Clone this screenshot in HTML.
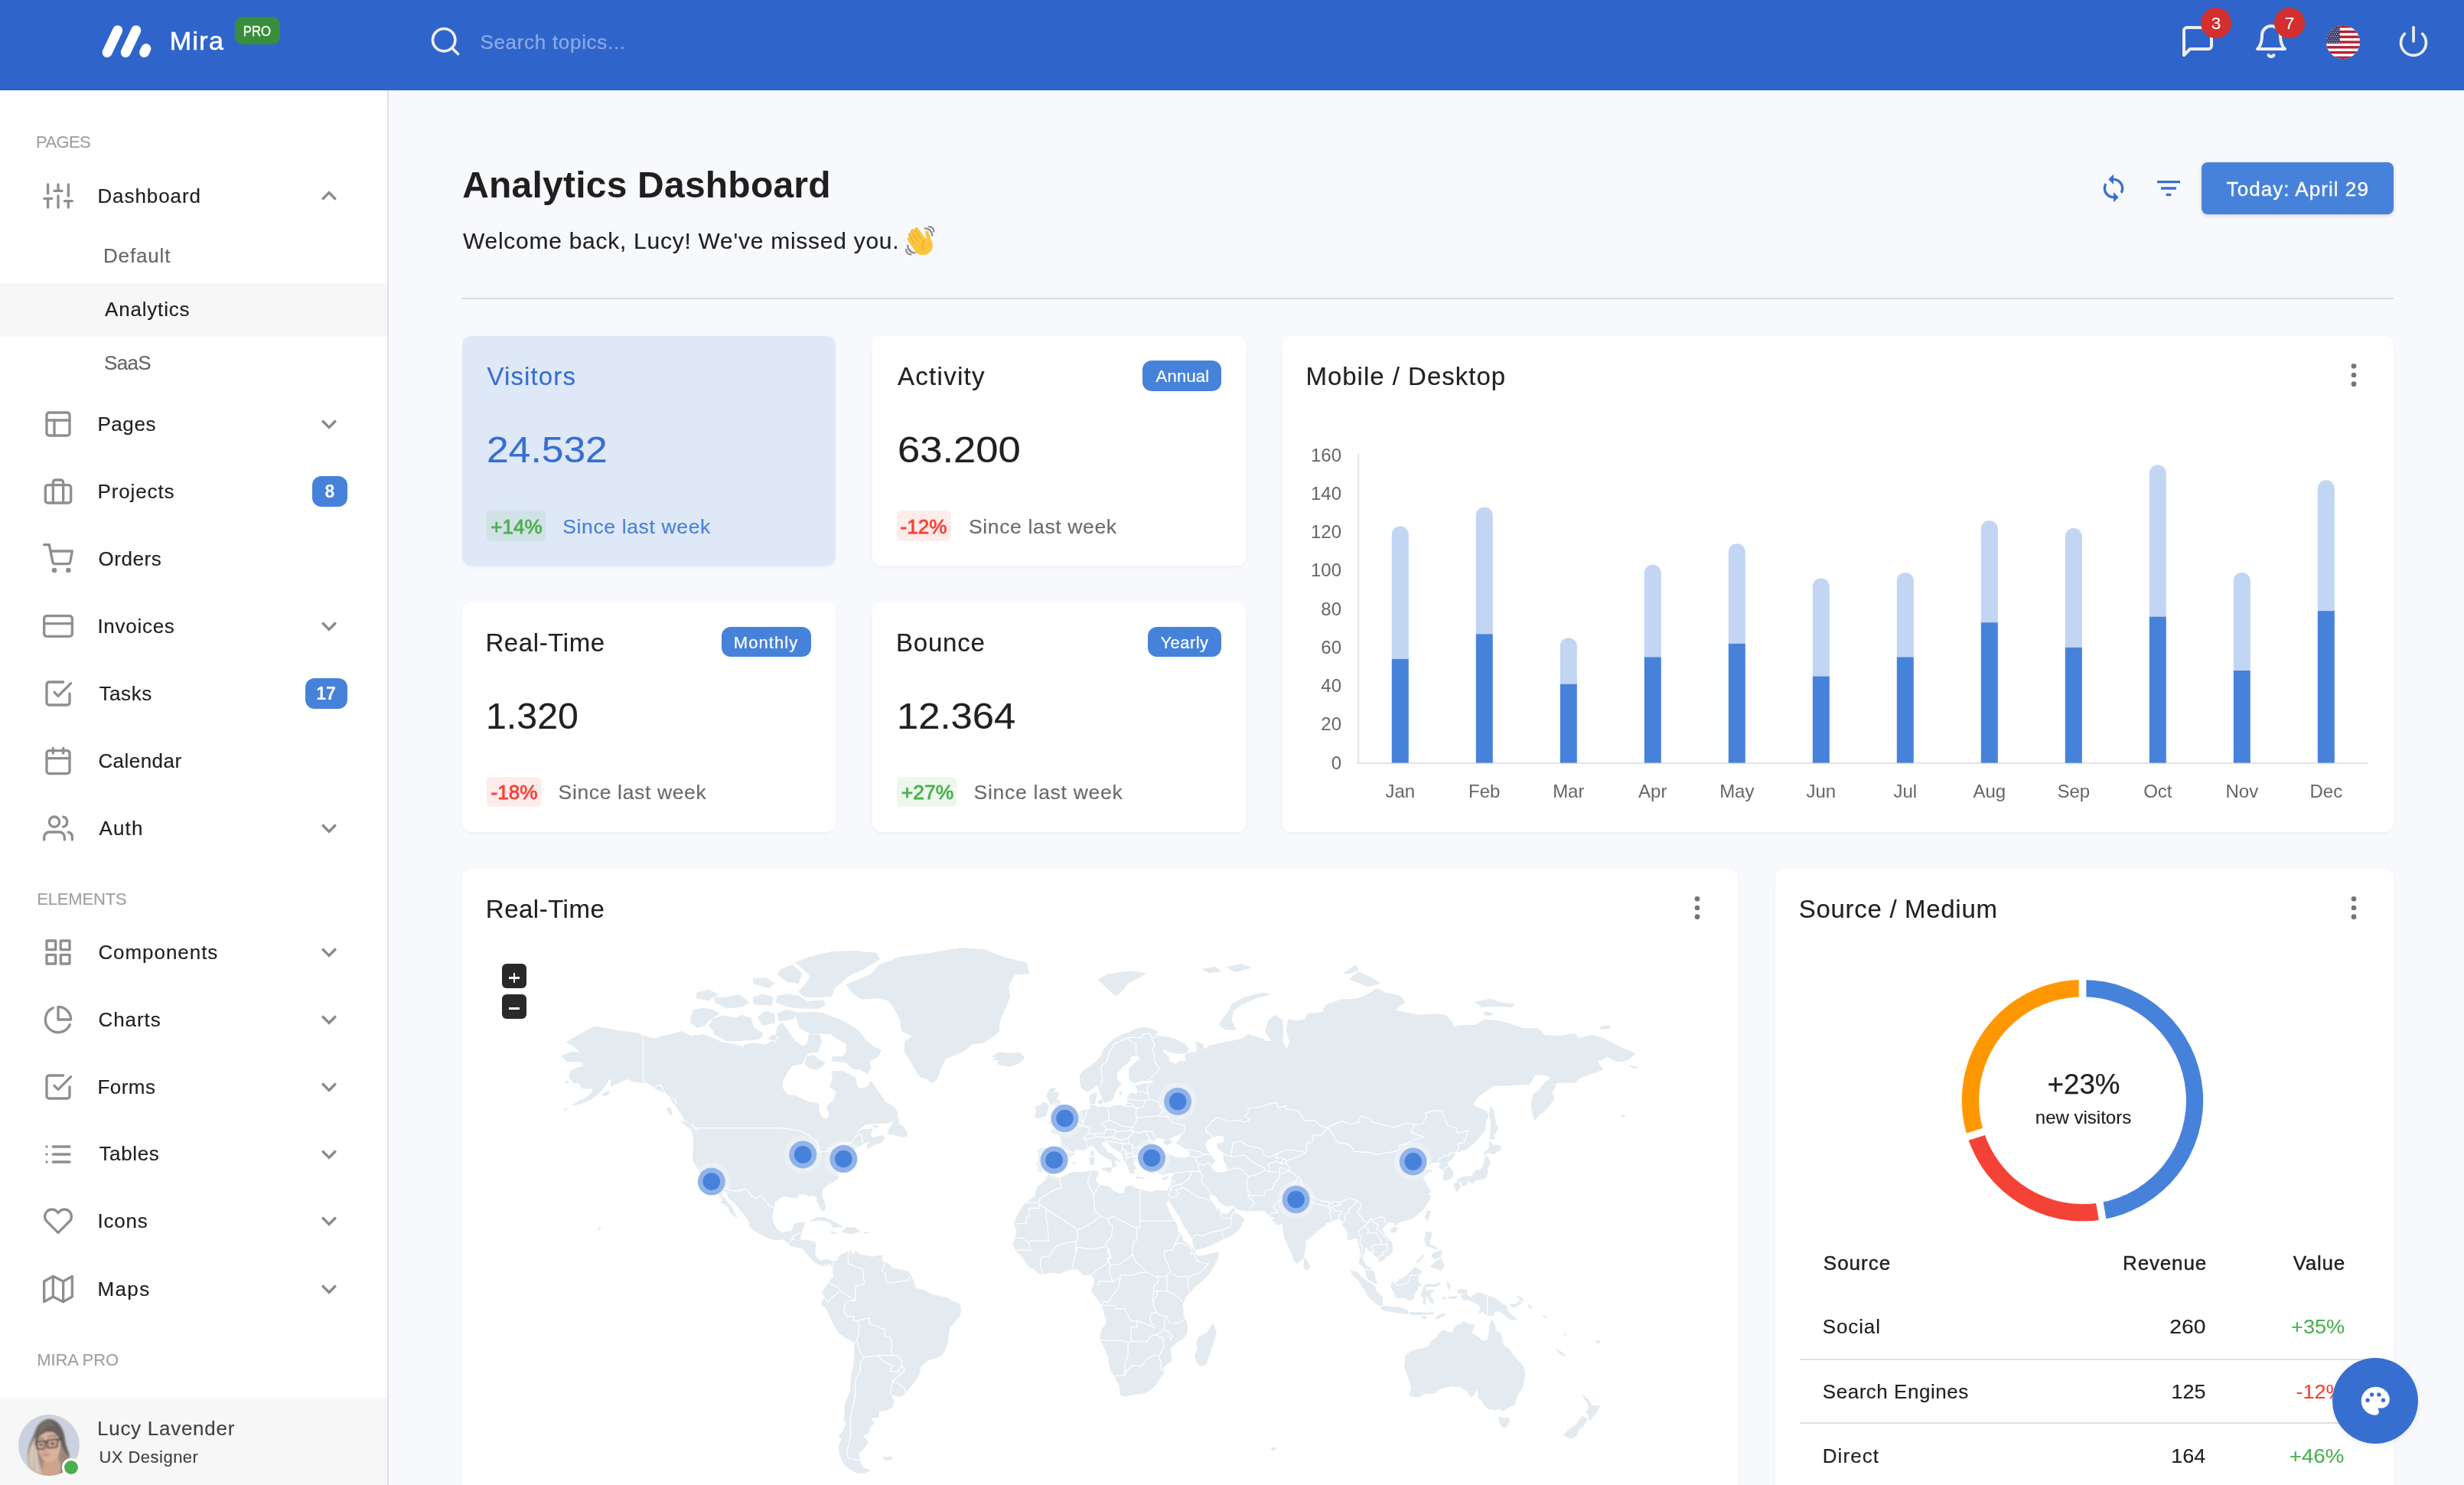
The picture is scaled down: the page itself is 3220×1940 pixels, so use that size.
<!DOCTYPE html>
<html lang="en"><head><meta charset="utf-8"><title>Analytics Dashboard | Mira</title>
<style>
html,body{margin:0;padding:0;}
body{width:3220px;height:1940px;overflow:hidden;position:relative;background:#f7f9fc;font-family:"Liberation Sans", sans-serif;}
.t{position:absolute;white-space:nowrap;margin:0;}
svg{display:block;overflow:visible;}
</style></head><body><div id="root" style="position:absolute;left:0;top:0;width:3220px;height:1940px;overflow:hidden;opacity:0.999">
<div style="position:absolute;left:0px;top:0px;width:3220px;height:1940px;background:#f7f9fc;"></div>
<div style="position:absolute;left:0px;top:118px;width:506px;height:1822px;background:#fff;"></div>
<div style="position:absolute;left:506px;top:118px;width:2px;height:1822px;background:#e0e0e0;"></div>
<div style="position:absolute;left:0px;top:0px;width:3220px;height:118px;background:#2f65cb;"></div>
<svg style="position:absolute;left:120px;top:20px" width="100" height="70" viewBox="120 20 100 70" fill="none" stroke="#fff" stroke-width="13" stroke-linecap="round"><line x1="140.1" y1="68.5" x2="153.7" y2="39.7"/><line x1="164.2" y1="68.5" x2="177.8" y2="39.7"/><line x1="188.6" y1="68.5" x2="190.9" y2="63.6"/></svg>
<div class="t" id="brand" style="top:36.02px;font-size:34px;line-height:34px;color:#fff;letter-spacing:1.300px;-webkit-text-stroke:0.5px #fff;left:221.80px;">Mira</div>
<div style="position:absolute;left:307px;top:22px;width:59px;height:36px;background:#388e3c;border-radius:10px;"></div>
<div class="t" id="pro" style="top:32.59px;font-size:17.5px;line-height:17.5px;color:#fff;-webkit-text-stroke:0.3px #fff;left:335.90px;transform:translateX(-50%) scaleX(0.9568);">PRO</div>
<svg style="position:absolute;left:559.70px;top:32.20px" width="44" height="44" viewBox="0 0 24 24" fill="none" stroke="#eeeeee" stroke-width="2" stroke-linecap="round" stroke-linejoin="round"><circle cx="11" cy="11" r="8"/><line x1="21" y1="21" x2="16.65" y2="16.65"/></svg>
<div class="t" id="search" style="top:42.29px;font-size:26px;line-height:26px;color:rgba(255,255,255,0.44);letter-spacing:0.700px;-webkit-text-stroke:0.15px rgba(255,255,255,0.44);left:627.40px;">Search topics...</div>
<svg style="position:absolute;left:2848.00px;top:30.00px" width="48" height="48" viewBox="0 0 24 24" fill="none" stroke="#eeeeee" stroke-width="2" stroke-linecap="round" stroke-linejoin="round"><path d="M21 15a2 2 0 0 1-2 2H7l-4 4V5a2 2 0 0 1 2-2h14a2 2 0 0 1 2 2z"/></svg>
<svg style="position:absolute;left:2944.00px;top:30.00px" width="48" height="48" viewBox="0 0 24 24" fill="none" stroke="#eeeeee" stroke-width="2" stroke-linecap="round" stroke-linejoin="round"><path d="M18 8A6 6 0 0 0 6 8c0 7-3 9-3 9h18s-3-2-3-9"/><path d="M13.73 21a2 2 0 0 1-3.46 0"/></svg>
<svg style="position:absolute;left:3132.00px;top:32.00px" width="44" height="44" viewBox="0 0 24 24" fill="none" stroke="#eeeeee" stroke-width="2" stroke-linecap="round" stroke-linejoin="round"><path d="M18.36 6.64a9 9 0 1 1-12.73 0"/><line x1="12" y1="2" x2="12" y2="12"/></svg>
<div style="position:absolute;left:2876px;top:10px;width:40px;height:40px;background:#d32f2f;border-radius:50%;"></div>
<div style="position:absolute;left:2972px;top:10px;width:40px;height:40px;background:#d32f2f;border-radius:50%;"></div>
<div class="t" id="b3" style="top:20.25px;font-size:22.5px;line-height:22.5px;color:#fff;-webkit-text-stroke:0.15px #fff;left:2896.00px;transform:translateX(-50%);">3</div>
<div class="t" id="b7" style="top:20.25px;font-size:22.5px;line-height:22.5px;color:#fff;-webkit-text-stroke:0.15px #fff;left:2992.00px;transform:translateX(-50%);">7</div>
<svg style="position:absolute;left:3040px;top:33px" width="44" height="44" viewBox="0 0 44 44"><defs><clipPath id="fc"><circle cx="22" cy="22" r="22"/></clipPath></defs><g clip-path="url(#fc)"><rect width="44" height="44" fill="#fff"/><rect x="0" y="0.000" width="44" height="3.385" fill="#b22234"/><rect x="0" y="6.769" width="44" height="3.385" fill="#b22234"/><rect x="0" y="13.538" width="44" height="3.385" fill="#b22234"/><rect x="0" y="20.308" width="44" height="3.385" fill="#b22234"/><rect x="0" y="27.077" width="44" height="3.385" fill="#b22234"/><rect x="0" y="33.846" width="44" height="3.385" fill="#b22234"/><rect x="0" y="40.615" width="44" height="3.385" fill="#b22234"/><rect x="0" y="0" width="17.6" height="23.692" fill="#3c3b6e"/><circle cx="1.50" cy="1.40" r="0.62" fill="#e8e8ee"/><circle cx="4.45" cy="1.40" r="0.62" fill="#e8e8ee"/><circle cx="7.40" cy="1.40" r="0.62" fill="#e8e8ee"/><circle cx="10.35" cy="1.40" r="0.62" fill="#e8e8ee"/><circle cx="13.30" cy="1.40" r="0.62" fill="#e8e8ee"/><circle cx="16.25" cy="1.40" r="0.62" fill="#e8e8ee"/><circle cx="2.97" cy="4.00" r="0.62" fill="#e8e8ee"/><circle cx="5.92" cy="4.00" r="0.62" fill="#e8e8ee"/><circle cx="8.87" cy="4.00" r="0.62" fill="#e8e8ee"/><circle cx="11.82" cy="4.00" r="0.62" fill="#e8e8ee"/><circle cx="14.77" cy="4.00" r="0.62" fill="#e8e8ee"/><circle cx="1.50" cy="6.60" r="0.62" fill="#e8e8ee"/><circle cx="4.45" cy="6.60" r="0.62" fill="#e8e8ee"/><circle cx="7.40" cy="6.60" r="0.62" fill="#e8e8ee"/><circle cx="10.35" cy="6.60" r="0.62" fill="#e8e8ee"/><circle cx="13.30" cy="6.60" r="0.62" fill="#e8e8ee"/><circle cx="16.25" cy="6.60" r="0.62" fill="#e8e8ee"/><circle cx="2.97" cy="9.20" r="0.62" fill="#e8e8ee"/><circle cx="5.92" cy="9.20" r="0.62" fill="#e8e8ee"/><circle cx="8.87" cy="9.20" r="0.62" fill="#e8e8ee"/><circle cx="11.82" cy="9.20" r="0.62" fill="#e8e8ee"/><circle cx="14.77" cy="9.20" r="0.62" fill="#e8e8ee"/><circle cx="1.50" cy="11.80" r="0.62" fill="#e8e8ee"/><circle cx="4.45" cy="11.80" r="0.62" fill="#e8e8ee"/><circle cx="7.40" cy="11.80" r="0.62" fill="#e8e8ee"/><circle cx="10.35" cy="11.80" r="0.62" fill="#e8e8ee"/><circle cx="13.30" cy="11.80" r="0.62" fill="#e8e8ee"/><circle cx="16.25" cy="11.80" r="0.62" fill="#e8e8ee"/><circle cx="2.97" cy="14.40" r="0.62" fill="#e8e8ee"/><circle cx="5.92" cy="14.40" r="0.62" fill="#e8e8ee"/><circle cx="8.87" cy="14.40" r="0.62" fill="#e8e8ee"/><circle cx="11.82" cy="14.40" r="0.62" fill="#e8e8ee"/><circle cx="14.77" cy="14.40" r="0.62" fill="#e8e8ee"/><circle cx="1.50" cy="17.00" r="0.62" fill="#e8e8ee"/><circle cx="4.45" cy="17.00" r="0.62" fill="#e8e8ee"/><circle cx="7.40" cy="17.00" r="0.62" fill="#e8e8ee"/><circle cx="10.35" cy="17.00" r="0.62" fill="#e8e8ee"/><circle cx="13.30" cy="17.00" r="0.62" fill="#e8e8ee"/><circle cx="16.25" cy="17.00" r="0.62" fill="#e8e8ee"/><circle cx="2.97" cy="19.60" r="0.62" fill="#e8e8ee"/><circle cx="5.92" cy="19.60" r="0.62" fill="#e8e8ee"/><circle cx="8.87" cy="19.60" r="0.62" fill="#e8e8ee"/><circle cx="11.82" cy="19.60" r="0.62" fill="#e8e8ee"/><circle cx="14.77" cy="19.60" r="0.62" fill="#e8e8ee"/><circle cx="1.50" cy="22.20" r="0.62" fill="#e8e8ee"/><circle cx="4.45" cy="22.20" r="0.62" fill="#e8e8ee"/><circle cx="7.40" cy="22.20" r="0.62" fill="#e8e8ee"/><circle cx="10.35" cy="22.20" r="0.62" fill="#e8e8ee"/><circle cx="13.30" cy="22.20" r="0.62" fill="#e8e8ee"/><circle cx="16.25" cy="22.20" r="0.62" fill="#e8e8ee"/></g></svg>
<div class="t" id="sec1" style="top:175.28px;font-size:22px;line-height:22px;color:#a0a0a0;letter-spacing:-0.600px;-webkit-text-stroke:0.15px #a0a0a0;left:47.00px;">PAGES</div>
<div class="t" id="sec2" style="top:1163.88px;font-size:22px;line-height:22px;color:#a0a0a0;letter-spacing:-0.157px;-webkit-text-stroke:0.15px #a0a0a0;left:48.20px;">ELEMENTS</div>
<div class="t" id="sec3" style="top:1766.08px;font-size:22px;line-height:22px;color:#a0a0a0;letter-spacing:-0.100px;-webkit-text-stroke:0.15px #a0a0a0;left:48.20px;">MIRA PRO</div>
<div style="position:absolute;left:0px;top:370px;width:506px;height:70px;background:#f7f7f7;"></div>
<svg style="position:absolute;left:56.00px;top:235.70px" width="40" height="40" viewBox="0 0 24 24" fill="none" stroke="#8f8f8f" stroke-width="2" stroke-linecap="round" stroke-linejoin="round"><line x1="4" y1="21" x2="4" y2="14"/><line x1="4" y1="10" x2="4" y2="3"/><line x1="12" y1="21" x2="12" y2="12"/><line x1="12" y1="8" x2="12" y2="3"/><line x1="20" y1="21" x2="20" y2="16"/><line x1="20" y1="12" x2="20" y2="3"/><line x1="1" y1="14" x2="7" y2="14"/><line x1="9" y1="8" x2="15" y2="8"/><line x1="17" y1="16" x2="23" y2="16"/></svg>
<div class="t" id="it0" style="top:242.69px;font-size:26px;line-height:26px;color:#212121;letter-spacing:0.925px;-webkit-text-stroke:0.15px #212121;left:127.40px;">Dashboard</div>
<svg style="position:absolute;left:410.00px;top:235.70px" width="40" height="40" viewBox="0 0 24 24" fill="#8a8a8a"><path d="m12 8-6 6 1.41 1.41L12 10.83l4.59 4.58L18 14z"/></svg>
<svg style="position:absolute;left:56.00px;top:533.90px" width="40" height="40" viewBox="0 0 24 24" fill="none" stroke="#8f8f8f" stroke-width="2" stroke-linecap="round" stroke-linejoin="round"><rect x="3" y="3" width="18" height="18" rx="2" ry="2"/><line x1="3" y1="9" x2="21" y2="9"/><line x1="9" y1="21" x2="9" y2="9"/></svg>
<div class="t" id="it1" style="top:540.89px;font-size:26px;line-height:26px;color:#212121;letter-spacing:0.575px;-webkit-text-stroke:0.15px #212121;left:127.40px;">Pages</div>
<svg style="position:absolute;left:410.00px;top:533.90px" width="40" height="40" viewBox="0 0 24 24" fill="#8a8a8a"><path d="M16.59 8.59 12 13.17 7.41 8.59 6 10l6 6 6-6z"/></svg>
<svg style="position:absolute;left:56.00px;top:622.00px" width="40" height="40" viewBox="0 0 24 24" fill="none" stroke="#8f8f8f" stroke-width="2" stroke-linecap="round" stroke-linejoin="round"><rect x="2" y="7" width="20" height="14" rx="2" ry="2"/><path d="M16 21V5a2 2 0 0 0-2-2h-4a2 2 0 0 0-2 2v16"/></svg>
<div class="t" id="it2" style="top:628.99px;font-size:26px;line-height:26px;color:#212121;letter-spacing:0.900px;-webkit-text-stroke:0.15px #212121;left:127.40px;">Projects</div>
<div style="position:absolute;left:408px;top:622px;width:46px;height:40px;background:#4782da;border-radius:12px;"></div>
<div class="t" id="bd2" style="top:631.03px;font-size:23px;line-height:23px;color:#fff;font-weight:700;left:431.00px;transform:translateX(-50%);">8</div>
<svg style="position:absolute;left:56.00px;top:710.00px" width="40" height="40" viewBox="0 0 24 24" fill="none" stroke="#8f8f8f" stroke-width="2" stroke-linecap="round" stroke-linejoin="round"><circle cx="9" cy="21" r="1"/><circle cx="20" cy="21" r="1"/><path d="M1 1h4l2.68 13.39a2 2 0 0 0 2 1.61h9.72a2 2 0 0 0 2-1.61L23 6H6"/></svg>
<div class="t" id="it3" style="top:716.99px;font-size:26px;line-height:26px;color:#212121;letter-spacing:0.600px;-webkit-text-stroke:0.15px #212121;left:128.40px;">Orders</div>
<svg style="position:absolute;left:56.00px;top:798.10px" width="40" height="40" viewBox="0 0 24 24" fill="none" stroke="#8f8f8f" stroke-width="2" stroke-linecap="round" stroke-linejoin="round"><rect x="1" y="4" width="22" height="16" rx="2" ry="2"/><line x1="1" y1="10" x2="23" y2="10"/></svg>
<div class="t" id="it4" style="top:805.09px;font-size:26px;line-height:26px;color:#212121;letter-spacing:0.729px;-webkit-text-stroke:0.15px #212121;left:127.40px;">Invoices</div>
<svg style="position:absolute;left:410.00px;top:798.10px" width="40" height="40" viewBox="0 0 24 24" fill="#8a8a8a"><path d="M16.59 8.59 12 13.17 7.41 8.59 6 10l6 6 6-6z"/></svg>
<svg style="position:absolute;left:56.00px;top:885.80px" width="40" height="40" viewBox="0 0 24 24" fill="none" stroke="#8f8f8f" stroke-width="2" stroke-linecap="round" stroke-linejoin="round"><polyline points="9 11 12 14 22 4"/><path d="M21 12v7a2 2 0 0 1-2 2H5a2 2 0 0 1-2-2V5a2 2 0 0 1 2-2h11"/></svg>
<div class="t" id="it5" style="top:892.79px;font-size:26px;line-height:26px;color:#212121;letter-spacing:0.600px;-webkit-text-stroke:0.15px #212121;left:129.40px;">Tasks</div>
<div style="position:absolute;left:399px;top:885.8px;width:55px;height:40px;background:#4782da;border-radius:12px;"></div>
<div class="t" id="bd5" style="top:894.83px;font-size:23px;line-height:23px;color:#fff;font-weight:700;left:426.00px;transform:translateX(-50%);">17</div>
<svg style="position:absolute;left:56.00px;top:973.60px" width="40" height="40" viewBox="0 0 24 24" fill="none" stroke="#8f8f8f" stroke-width="2" stroke-linecap="round" stroke-linejoin="round"><rect x="3" y="4" width="18" height="18" rx="2" ry="2"/><line x1="16" y1="2" x2="16" y2="6"/><line x1="8" y1="2" x2="8" y2="6"/><line x1="3" y1="10" x2="21" y2="10"/></svg>
<div class="t" id="it6" style="top:980.59px;font-size:26px;line-height:26px;color:#212121;letter-spacing:0.457px;-webkit-text-stroke:0.15px #212121;left:128.40px;">Calendar</div>
<svg style="position:absolute;left:56.00px;top:1062.30px" width="40" height="40" viewBox="0 0 24 24" fill="none" stroke="#8f8f8f" stroke-width="2" stroke-linecap="round" stroke-linejoin="round"><path d="M17 21v-2a4 4 0 0 0-4-4H5a4 4 0 0 0-4 4v2"/><circle cx="9" cy="7" r="4"/><path d="M23 21v-2a4 4 0 0 0-3-3.87"/><path d="M16 3.13a4 4 0 0 1 0 7.75"/></svg>
<div class="t" id="it7" style="top:1069.29px;font-size:26px;line-height:26px;color:#212121;letter-spacing:1.167px;-webkit-text-stroke:0.15px #212121;left:129.40px;">Auth</div>
<svg style="position:absolute;left:410.00px;top:1062.30px" width="40" height="40" viewBox="0 0 24 24" fill="#8a8a8a"><path d="M16.59 8.59 12 13.17 7.41 8.59 6 10l6 6 6-6z"/></svg>
<svg style="position:absolute;left:56.00px;top:1223.70px" width="40" height="40" viewBox="0 0 24 24" fill="none" stroke="#8f8f8f" stroke-width="2" stroke-linecap="round" stroke-linejoin="round"><rect x="3" y="3" width="7" height="7"/><rect x="14" y="3" width="7" height="7"/><rect x="14" y="14" width="7" height="7"/><rect x="3" y="14" width="7" height="7"/></svg>
<div class="t" id="it8" style="top:1230.69px;font-size:26px;line-height:26px;color:#212121;letter-spacing:0.944px;-webkit-text-stroke:0.15px #212121;left:128.40px;">Components</div>
<svg style="position:absolute;left:410.00px;top:1223.70px" width="40" height="40" viewBox="0 0 24 24" fill="#8a8a8a"><path d="M16.59 8.59 12 13.17 7.41 8.59 6 10l6 6 6-6z"/></svg>
<svg style="position:absolute;left:56.00px;top:1311.70px" width="40" height="40" viewBox="0 0 24 24" fill="none" stroke="#8f8f8f" stroke-width="2" stroke-linecap="round" stroke-linejoin="round"><path d="M21.21 15.89A10 10 0 1 1 8 2.83"/><path d="M22 12A10 10 0 0 0 12 2v10z"/></svg>
<div class="t" id="it9" style="top:1318.69px;font-size:26px;line-height:26px;color:#212121;letter-spacing:0.960px;-webkit-text-stroke:0.15px #212121;left:128.40px;">Charts</div>
<svg style="position:absolute;left:410.00px;top:1311.70px" width="40" height="40" viewBox="0 0 24 24" fill="#8a8a8a"><path d="M16.59 8.59 12 13.17 7.41 8.59 6 10l6 6 6-6z"/></svg>
<svg style="position:absolute;left:56.00px;top:1399.60px" width="40" height="40" viewBox="0 0 24 24" fill="none" stroke="#8f8f8f" stroke-width="2" stroke-linecap="round" stroke-linejoin="round"><polyline points="9 11 12 14 22 4"/><path d="M21 12v7a2 2 0 0 1-2 2H5a2 2 0 0 1-2-2V5a2 2 0 0 1 2-2h11"/></svg>
<div class="t" id="it10" style="top:1406.59px;font-size:26px;line-height:26px;color:#212121;letter-spacing:0.475px;-webkit-text-stroke:0.15px #212121;left:127.40px;">Forms</div>
<svg style="position:absolute;left:410.00px;top:1399.60px" width="40" height="40" viewBox="0 0 24 24" fill="#8a8a8a"><path d="M16.59 8.59 12 13.17 7.41 8.59 6 10l6 6 6-6z"/></svg>
<svg style="position:absolute;left:56.00px;top:1487.50px" width="40" height="40" viewBox="0 0 24 24" fill="none" stroke="#8f8f8f" stroke-width="2" stroke-linecap="round" stroke-linejoin="round"><line x1="8" y1="6" x2="21" y2="6"/><line x1="8" y1="12" x2="21" y2="12"/><line x1="8" y1="18" x2="21" y2="18"/><line x1="3" y1="6" x2="3.01" y2="6"/><line x1="3" y1="12" x2="3.01" y2="12"/><line x1="3" y1="18" x2="3.01" y2="18"/></svg>
<div class="t" id="it11" style="top:1494.49px;font-size:26px;line-height:26px;color:#212121;letter-spacing:0.640px;-webkit-text-stroke:0.15px #212121;left:129.40px;">Tables</div>
<svg style="position:absolute;left:410.00px;top:1487.50px" width="40" height="40" viewBox="0 0 24 24" fill="#8a8a8a"><path d="M16.59 8.59 12 13.17 7.41 8.59 6 10l6 6 6-6z"/></svg>
<svg style="position:absolute;left:56.00px;top:1575.30px" width="40" height="40" viewBox="0 0 24 24" fill="none" stroke="#8f8f8f" stroke-width="2" stroke-linecap="round" stroke-linejoin="round"><path d="M20.84 4.61a5.5 5.5 0 0 0-7.78 0L12 5.67l-1.06-1.06a5.5 5.5 0 0 0-7.78 7.78l1.06 1.06L12 21.23l7.78-7.78 1.06-1.06a5.5 5.5 0 0 0 0-7.78z"/></svg>
<div class="t" id="it12" style="top:1582.29px;font-size:26px;line-height:26px;color:#212121;letter-spacing:0.800px;-webkit-text-stroke:0.15px #212121;left:127.40px;">Icons</div>
<svg style="position:absolute;left:410.00px;top:1575.30px" width="40" height="40" viewBox="0 0 24 24" fill="#8a8a8a"><path d="M16.59 8.59 12 13.17 7.41 8.59 6 10l6 6 6-6z"/></svg>
<svg style="position:absolute;left:56.00px;top:1663.60px" width="40" height="40" viewBox="0 0 24 24" fill="none" stroke="#8f8f8f" stroke-width="2" stroke-linecap="round" stroke-linejoin="round"><polygon points="1 6 1 22 8 18 16 22 23 18 23 2 16 6 8 2 1 6"/><line x1="8" y1="2" x2="8" y2="18"/><line x1="16" y1="6" x2="16" y2="22"/></svg>
<div class="t" id="it13" style="top:1670.59px;font-size:26px;line-height:26px;color:#212121;letter-spacing:1.400px;-webkit-text-stroke:0.15px #212121;left:127.40px;">Maps</div>
<svg style="position:absolute;left:410.00px;top:1663.60px" width="40" height="40" viewBox="0 0 24 24" fill="#8a8a8a"><path d="M16.59 8.59 12 13.17 7.41 8.59 6 10l6 6 6-6z"/></svg>
<div class="t" id="sub0" style="top:321.49px;font-size:26px;line-height:26px;color:#666;letter-spacing:0.833px;-webkit-text-stroke:0.15px #666;left:135.00px;">Default</div>
<div class="t" id="sub1" style="top:391.29px;font-size:26px;line-height:26px;color:#212121;letter-spacing:0.812px;-webkit-text-stroke:0.15px #212121;left:137.00px;">Analytics</div>
<div class="t" id="sub2" style="top:461.19px;font-size:26px;line-height:26px;color:#666;letter-spacing:-0.667px;-webkit-text-stroke:0.15px #666;left:136.00px;">SaaS</div>
<div style="position:absolute;left:0px;top:1826px;width:506px;height:114px;background:#f7f7f7;"></div>
<div class="t" id="un" style="top:1853.49px;font-size:26px;line-height:26px;color:#424242;letter-spacing:0.733px;-webkit-text-stroke:0.15px #424242;left:127.00px;">Lucy Lavender</div>
<div class="t" id="ur" style="top:1892.98px;font-size:22px;line-height:22px;color:#424242;letter-spacing:0.480px;-webkit-text-stroke:0.15px #424242;left:129.40px;">UX Designer</div>
<svg style="position:absolute;left:24px;top:1848px" width="80" height="80" viewBox="0 0 80 80"><defs><clipPath id="ac"><circle cx="40" cy="40" r="40"/></clipPath><filter id="ab" x="-10%" y="-10%" width="120%" height="120%"><feGaussianBlur stdDeviation="1"/></filter><linearGradient id="hg" x1="0" y1="0" x2="0" y2="1"><stop offset="0" stop-color="#6a645f"/><stop offset="0.55" stop-color="#8d8178"/><stop offset="1" stop-color="#c3a892"/></linearGradient></defs><g clip-path="url(#ac)"><rect width="80" height="80" fill="#cbd1de"/><g filter="url(#ab)"><path d="M40 6 C30 7 24 14 21 24 C17 34 11 44 12 56 C12 66 16 76 22 84 L62 84 C66 74 68 64 67 56 C66 48 62 42 61 34 C60 20 52 6 40 6Z" fill="url(#hg)"/><path d="M22 30 C16 40 11 50 13 62 C14 70 18 78 24 84 L36 84 C30 74 26 62 25 50 C24 42 24 36 22 30Z" fill="#cdbcad"/><path d="M33 58 L52 54 C53 64 58 70 66 74 L66 84 L28 84 C32 76 34 68 33 58Z" fill="#cfa38c"/><path d="M25 33 C27 24 36 20 45 23 C52 26 56 34 55 44 C54 53 49 60 42 62 C36 63 30 58 27 50 C25 44 24 38 25 33Z" fill="#dab29c"/><path d="M40 6 C52 6 60 20 61 34 C62 42 66 48 67 56 C64 52 60 50 57 44 C56 34 52 26 45 23 C38 21 30 24 26 31 C24 35 23 38 22 42 C21 32 24 18 30 11 C33 8 36 6 40 6Z" fill="#67615d"/><path d="M56 40 C60 48 64 52 64 60 C62 68 60 72 60 80 L54 80 C56 70 56 58 54 50Z" fill="#9a8a7d"/><path d="M30 50 q3 -2 7 0" stroke="#c49a86" stroke-width="1.5" fill="none"/><path d="M32 52.4 q4 1.4 8 -0.4" stroke="#b0706c" stroke-width="1.8" fill="none" stroke-linecap="round"/><path d="M24 35.5 l9.5 -1 q1.5 0 1.5 1.5 l-0.3 7 q-0.2 1.6 -1.8 1.8 l-6.5 0.6 q-1.8 0 -2 -1.8 Z M38 33.6 l11.5 -1.6 q1.8 -0.2 1.8 1.6 l-0.6 7.2 q-0.3 1.8 -2 2 l-8.6 0.8 q-1.8 0 -2 -1.8 Z" fill="rgba(120,110,105,0.12)" stroke="#3c3c3e" stroke-width="1.9" stroke-linejoin="round"/><path d="M35 35.8 l3 -0.6 M51 33.2 l5 -1.6" stroke="#3c3c3e" stroke-width="2"/><ellipse cx="29.6" cy="39.6" rx="2.6" ry="1.3" fill="#4a3f3a"/><ellipse cx="44.6" cy="38" rx="3" ry="1.4" fill="#4a3f3a"/><path d="M36.5 40 q-1.5 5 -1 7.5 q1.5 1 3 0.4" stroke="#c09680" stroke-width="1.2" fill="none"/><path d="M30 12 q6 -4 14 -2 M27 18 q8 -7 20 -4 M25 26 q4 -8 12 -9" stroke="#8a8079" stroke-width="1.2" fill="none"/><path d="M20 40 q-4 14 -2 28 M24 46 q-2 14 2 30" stroke="#e2d6cb" stroke-width="1.4" fill="none"/><path d="M38 29.5 q6 -3 12 -1.2 M25 32.5 q4 -2.2 8 -1.5" stroke="#6b5a50" stroke-width="1.4" fill="none"/></g></g></svg>
<div style="position:absolute;left:81.2px;top:1905.1px;width:23.6px;height:23.6px;background:#fff;border-radius:50%;"></div>
<div style="position:absolute;left:83.9px;top:1907.8px;width:18.2px;height:18.2px;background:#4caf50;border-radius:50%;"></div>
<div class="t" id="title" style="top:217.57px;font-size:48px;line-height:48px;color:#1f1f1f;font-weight:700;letter-spacing:0.217px;left:604.20px;">Analytics Dashboard</div>
<div class="t" id="subt" style="top:299.61px;font-size:30px;line-height:30px;color:#212121;letter-spacing:0.733px;-webkit-text-stroke:0.15px #212121;left:605.00px;">Welcome back, Lucy! We've missed you.</div>
<svg aria-label="👋" style="position:absolute;left:1183px;top:295px" width="38.5" height="38.5" viewBox="0 0 36 36"><path fill="#e8a33a" d="M4.861 9.147c.94-.657 2.357-.531 3.201.166l-.968-1.407c-.779-1.111-.5-2.313.612-3.093 1.112-.777 4.263 1.312 4.263 1.312-.786-1.122-.639-2.544.483-3.331 1.122-.784 2.67-.513 3.456.611l10.42 14.72L25 31l-11.083-4.042L4.25 12.625c-.793-1.129-.519-2.686.611-3.478z"/><path fill="#fbc53d" d="M2.695 17.336s-1.132-1.65.519-2.781c1.649-1.131 2.78.518 2.78.518l5.251 7.658c.181-.302.379-.6.6-.894L4.557 11.21s-1.131-1.649.519-2.78c1.649-1.131 2.78.518 2.78.518l6.855 9.997c.255-.208.516-.417.785-.622L7.549 6.732s-1.131-1.649.519-2.78c1.649-1.131 2.78.518 2.78.518l7.947 11.589c.292-.179.581-.334.871-.498L12.238 4.729s-1.131-1.649.518-2.78c1.649-1.131 2.78.518 2.78.518l7.854 11.454 1.194 1.742c-4.948 3.394-5.419 9.779-2.592 13.902.565.825 1.39.26 1.39.26-3.393-4.949-2.357-10.51 2.592-13.903L24.515 8.62s-.545-1.924 1.378-2.47c1.924-.545 2.47 1.379 2.47 1.379l1.685 5.004c.668 1.984 1.379 3.961 2.32 5.831 2.657 5.28 1.07 11.842-3.94 15.279-5.465 3.747-12.936 2.354-16.684-3.11L2.695 17.336z"/><g fill="#8a8a8a"><path d="M12 32.042C8 32.042 3.958 28 3.958 24c0-.553-.405-1-.958-1s-1.042.447-1.042 1C1.958 30 6 34.042 12 34.042c.553 0 1-.489 1-1.042s-.447-.958-1-.958z"/><path d="M7 34c-3 0-5-2-5-5 0-.553-.447-1-1-1s-1 .447-1 1c0 4 3 7 7 7 .553 0 1-.447 1-1s-.447-1-1-1zM24 2c-.552 0-1 .448-1 1s.448 1 1 1c4 0 8 3.589 8 8 0 .552.448 1 1 1s1-.448 1-1c0-5.514-4-10-10-10z"/><path d="M29 .042c-.552 0-1 .406-1 .958s.448 1.042 1 1.042c3 0 4.958 2.225 4.958 4.958 0 .552.489 1 1.042 1s.958-.448.958-1C35.958 3.163 33 .042 29 .042z"/></g></svg>
<svg style="position:absolute;left:2742.00px;top:226.00px" width="40" height="40" viewBox="0 0 24 24" fill="#376fd0"><path d="M12 4V1L8 5l4 4V6c3.31 0 6 2.69 6 6 0 1.01-.25 1.97-.7 2.8l1.46 1.46A7.93 7.93 0 0 0 20 12c0-4.42-3.58-8-8-8zm0 14c-3.31 0-6-2.69-6-6 0-1.01.25-1.97.7-2.8L5.24 7.74A7.93 7.93 0 0 0 4 12c0 4.42 3.58 8 8 8v3l4-4-4-4v3z"/></svg>
<svg style="position:absolute;left:2814.00px;top:226.00px" width="40" height="40" viewBox="0 0 24 24" fill="#376fd0"><path d="M10 18h4v-2h-4v2zM3 6v2h18V6H3zm3 7h12v-2H6v2z"/></svg>
<div style="position:absolute;left:2877px;top:212px;width:251px;height:68px;background:#4782da;border-radius:8px;box-shadow:0 2px 4px 0 rgba(0,0,0,.10),0 1px 6px 0 rgba(0,0,0,.06);"></div>
<div class="t" id="today" style="top:233.89px;font-size:26px;line-height:26px;color:#fff;letter-spacing:1.050px;-webkit-text-stroke:0.3px #fff;left:2909.60px;">Today: April 29</div>
<div style="position:absolute;left:604px;top:389px;width:2524px;height:2px;background:#d9dbdf;"></div>
<div style="position:absolute;left:604px;top:439.3px;width:488px;height:299.7px;background:#dfe8f7;border-radius:12px;box-shadow:rgba(50,50,93,0.025) 0 4px 10px -2px, rgba(0,0,0,0.05) 0 2px 6px -2px;"></div>
<div class="t" id="s0t" style="top:475.27px;font-size:33px;line-height:33px;color:#376fd0;letter-spacing:1.143px;-webkit-text-stroke:0.15px #376fd0;left:636.40px;">Visitors</div>
<div class="t" id="s0v" style="top:563.32px;font-size:49px;line-height:49px;color:#376fd0;-webkit-text-stroke:0.15px #376fd0;left:636.00px;transform:scaleX(1.0527);transform-origin:0 50%;">24.532</div>
<div style="position:absolute;left:636px;top:667.3px;width:76.6px;height:39.5px;background:rgba(76,175,80,0.1);border-radius:6px;"></div>
<div class="t" id="s0p" style="top:674.87px;font-size:26.5px;line-height:26.5px;color:#4caf50;-webkit-text-stroke:0.8px #4caf50;left:674.60px;transform:translateX(-50%) scaleX(0.9836);">+14%</div>
<div class="t" id="s0s" style="top:674.87px;font-size:26.5px;line-height:26.5px;color:#4782da;letter-spacing:0.643px;-webkit-text-stroke:0.15px #4782da;left:735.20px;">Since last week</div>
<div style="position:absolute;left:1140.3px;top:439.3px;width:488px;height:299.7px;background:#fff;border-radius:12px;box-shadow:rgba(50,50,93,0.025) 0 4px 10px -2px, rgba(0,0,0,0.05) 0 2px 6px -2px;"></div>
<div class="t" id="s1t" style="top:475.27px;font-size:33px;line-height:33px;color:#212121;letter-spacing:1.286px;-webkit-text-stroke:0.15px #212121;left:1173.00px;">Activity</div>
<div class="t" id="s1v" style="top:563.32px;font-size:49px;line-height:49px;color:#212121;-webkit-text-stroke:0.15px #212121;left:1172.60px;transform:scaleX(1.0728);transform-origin:0 50%;">63.200</div>
<div style="position:absolute;left:1172.3px;top:667.3px;width:70.7px;height:39.5px;background:rgba(244,67,54,0.1);border-radius:6px;"></div>
<div class="t" id="s1p" style="top:674.87px;font-size:26.5px;line-height:26.5px;color:#f44336;-webkit-text-stroke:0.8px #f44336;left:1207.30px;transform:translateX(-50%) scaleX(0.9852);">-12%</div>
<div class="t" id="s1s" style="top:674.87px;font-size:26.5px;line-height:26.5px;color:#6b6b6b;letter-spacing:0.643px;-webkit-text-stroke:0.15px #6b6b6b;left:1266.00px;">Since last week</div>
<div style="position:absolute;left:1493.0px;top:471.1px;width:103px;height:39.7px;background:#4782da;border-radius:12px;"></div>
<div class="t" id="s1c" style="top:480.98px;font-size:22px;line-height:22px;color:#fff;letter-spacing:0.240px;-webkit-text-stroke:0.2px #fff;left:1545.50px;transform:translateX(-50%);">Annual</div>
<div style="position:absolute;left:604px;top:786.9px;width:488px;height:299.7px;background:#fff;border-radius:12px;box-shadow:rgba(50,50,93,0.025) 0 4px 10px -2px, rgba(0,0,0,0.05) 0 2px 6px -2px;"></div>
<div class="t" id="s2t" style="top:822.87px;font-size:33px;line-height:33px;color:#212121;letter-spacing:0.600px;-webkit-text-stroke:0.15px #212121;left:634.40px;">Real-Time</div>
<div class="t" id="s2v" style="top:910.92px;font-size:49px;line-height:49px;color:#212121;-webkit-text-stroke:0.15px #212121;left:635.00px;transform:scaleX(0.9856);transform-origin:0 50%;">1.320</div>
<div style="position:absolute;left:636px;top:1014.9px;width:70.8px;height:39.5px;background:rgba(244,67,54,0.1);border-radius:6px;"></div>
<div class="t" id="s2p" style="top:1022.47px;font-size:26.5px;line-height:26.5px;color:#f44336;-webkit-text-stroke:0.8px #f44336;left:671.80px;transform:translateX(-50%) scaleX(0.9852);">-18%</div>
<div class="t" id="s2s" style="top:1022.47px;font-size:26.5px;line-height:26.5px;color:#6b6b6b;letter-spacing:0.643px;-webkit-text-stroke:0.15px #6b6b6b;left:729.60px;">Since last week</div>
<div style="position:absolute;left:943.4000000000001px;top:818.6999999999999px;width:116.3px;height:39.7px;background:#4782da;border-radius:12px;"></div>
<div class="t" id="s2c" style="top:828.58px;font-size:22px;line-height:22px;color:#fff;letter-spacing:1.083px;-webkit-text-stroke:0.2px #fff;left:1001.10px;transform:translateX(-50%);">Monthly</div>
<div style="position:absolute;left:1140.3px;top:786.9px;width:488px;height:299.7px;background:#fff;border-radius:12px;box-shadow:rgba(50,50,93,0.025) 0 4px 10px -2px, rgba(0,0,0,0.05) 0 2px 6px -2px;"></div>
<div class="t" id="s3t" style="top:822.87px;font-size:33px;line-height:33px;color:#212121;letter-spacing:0.800px;-webkit-text-stroke:0.15px #212121;left:1171.00px;">Bounce</div>
<div class="t" id="s3v" style="top:910.92px;font-size:49px;line-height:49px;color:#212121;-webkit-text-stroke:0.15px #212121;left:1171.60px;transform:scaleX(1.0366);transform-origin:0 50%;">12.364</div>
<div style="position:absolute;left:1172.3px;top:1014.9px;width:78px;height:39.5px;background:rgba(76,175,80,0.1);border-radius:6px;"></div>
<div class="t" id="s3p" style="top:1022.47px;font-size:26.5px;line-height:26.5px;color:#4caf50;-webkit-text-stroke:0.8px #4caf50;left:1211.60px;transform:translateX(-50%) scaleX(0.9985);">+27%</div>
<div class="t" id="s3s" style="top:1022.47px;font-size:26.5px;line-height:26.5px;color:#6b6b6b;letter-spacing:0.714px;-webkit-text-stroke:0.15px #6b6b6b;left:1272.60px;">Since last week</div>
<div style="position:absolute;left:1500.0px;top:818.6999999999999px;width:96px;height:39.7px;background:#4782da;border-radius:12px;"></div>
<div class="t" id="s3c" style="top:828.58px;font-size:22px;line-height:22px;color:#fff;letter-spacing:0.440px;-webkit-text-stroke:0.2px #fff;left:1548.00px;transform:translateX(-50%);">Yearly</div>
<div style="position:absolute;left:1676px;top:439.3px;width:1452px;height:647.4px;background:#fff;border-radius:12px;box-shadow:rgba(50,50,93,0.025) 0 4px 10px -2px, rgba(0,0,0,0.05) 0 2px 6px -2px;"></div>
<div class="t" id="bct" style="top:475.27px;font-size:33px;line-height:33px;color:#212121;letter-spacing:1.000px;-webkit-text-stroke:0.15px #212121;left:1706.40px;">Mobile / Desktop</div>
<svg style="position:absolute;left:3056.00px;top:470.00px" width="40" height="40" viewBox="0 0 24 24" fill="none" stroke="#757575" stroke-width="2" stroke-linecap="round" stroke-linejoin="round"><circle cx="12" cy="12" r="2" fill="#757575" stroke="none"/><circle cx="12" cy="5" r="2" fill="#757575" stroke="none"/><circle cx="12" cy="19" r="2" fill="#757575" stroke="none"/></svg>
<svg style="position:absolute;left:1676px;top:560px" width="1452" height="520" viewBox="1676 560 1452 520"><line x1="1775.2" y1="593" x2="1775.2" y2="997.6" stroke="#e3e3e3" stroke-width="2"/><line x1="1773.5" y1="997.1" x2="3095" y2="997.1" stroke="#e3e3e3" stroke-width="2"/><path d="M1818.8 860.9 V698.6 A11 11 0 0 1 1840.8 698.6 V860.9 Z" fill="#c2d5f3"/><rect x="1818.8" y="860.9" width="22" height="135.7" fill="#4782da"/><text x="1829.8" y="1042" text-anchor="middle" font-family='"Liberation Sans", sans-serif' font-size="24" fill="#666">Jan</text><path d="M1928.8 828.3 V673.4 A11 11 0 0 1 1950.8 673.4 V828.3 Z" fill="#c2d5f3"/><rect x="1928.8" y="828.3" width="22" height="168.3" fill="#4782da"/><text x="1939.8" y="1042" text-anchor="middle" font-family='"Liberation Sans", sans-serif' font-size="24" fill="#666">Feb</text><path d="M2038.8 893.6 V844.3 A11 11 0 0 1 2060.8 844.3 V893.6 Z" fill="#c2d5f3"/><rect x="2038.8" y="893.6" width="22" height="103.0" fill="#4782da"/><text x="2049.8" y="1042" text-anchor="middle" font-family='"Liberation Sans", sans-serif' font-size="24" fill="#666">Mar</text><path d="M2148.8 858.4 V748.8 A11 11 0 0 1 2170.8 748.8 V858.4 Z" fill="#c2d5f3"/><rect x="2148.8" y="858.4" width="22" height="138.2" fill="#4782da"/><text x="2159.8" y="1042" text-anchor="middle" font-family='"Liberation Sans", sans-serif' font-size="24" fill="#666">Apr</text><path d="M2258.8 840.8 V721.2 A11 11 0 0 1 2280.8 721.2 V840.8 Z" fill="#c2d5f3"/><rect x="2258.8" y="840.8" width="22" height="155.8" fill="#4782da"/><text x="2269.8" y="1042" text-anchor="middle" font-family='"Liberation Sans", sans-serif' font-size="24" fill="#666">May</text><path d="M2368.8 883.5 V766.4 A11 11 0 0 1 2390.8 766.4 V883.5 Z" fill="#c2d5f3"/><rect x="2368.8" y="883.5" width="22" height="113.1" fill="#4782da"/><text x="2379.8" y="1042" text-anchor="middle" font-family='"Liberation Sans", sans-serif' font-size="24" fill="#666">Jun</text><path d="M2478.8 858.4 V758.9 A11 11 0 0 1 2500.8 758.9 V858.4 Z" fill="#c2d5f3"/><rect x="2478.8" y="858.4" width="22" height="138.2" fill="#4782da"/><text x="2489.8" y="1042" text-anchor="middle" font-family='"Liberation Sans", sans-serif' font-size="24" fill="#666">Jul</text><path d="M2588.8 813.2 V691.0 A11 11 0 0 1 2610.8 691.0 V813.2 Z" fill="#c2d5f3"/><rect x="2588.8" y="813.2" width="22" height="183.4" fill="#4782da"/><text x="2599.8" y="1042" text-anchor="middle" font-family='"Liberation Sans", sans-serif' font-size="24" fill="#666">Aug</text><path d="M2698.8 845.9 V701.1 A11 11 0 0 1 2720.8 701.1 V845.9 Z" fill="#c2d5f3"/><rect x="2698.8" y="845.9" width="22" height="150.8" fill="#4782da"/><text x="2709.8" y="1042" text-anchor="middle" font-family='"Liberation Sans", sans-serif' font-size="24" fill="#666">Sep</text><path d="M2808.8 805.6 V618.2 A11 11 0 0 1 2830.8 618.2 V805.6 Z" fill="#c2d5f3"/><rect x="2808.8" y="805.6" width="22" height="191.0" fill="#4782da"/><text x="2819.8" y="1042" text-anchor="middle" font-family='"Liberation Sans", sans-serif' font-size="24" fill="#666">Oct</text><path d="M2918.8 876.0 V758.9 A11 11 0 0 1 2940.8 758.9 V876.0 Z" fill="#c2d5f3"/><rect x="2918.8" y="876.0" width="22" height="120.6" fill="#4782da"/><text x="2929.8" y="1042" text-anchor="middle" font-family='"Liberation Sans", sans-serif' font-size="24" fill="#666">Nov</text><path d="M3028.8 798.1 V638.3 A11 11 0 0 1 3050.8 638.3 V798.1 Z" fill="#c2d5f3"/><rect x="3028.8" y="798.1" width="22" height="198.5" fill="#4782da"/><text x="3039.8" y="1042" text-anchor="middle" font-family='"Liberation Sans", sans-serif' font-size="24" fill="#666">Dec</text><text x="1753" y="1004.6" text-anchor="end" font-family='"Liberation Sans", sans-serif' font-size="24" fill="#666">0</text><text x="1753" y="954.4" text-anchor="end" font-family='"Liberation Sans", sans-serif' font-size="24" fill="#666">20</text><text x="1753" y="904.1" text-anchor="end" font-family='"Liberation Sans", sans-serif' font-size="24" fill="#666">40</text><text x="1753" y="853.9" text-anchor="end" font-family='"Liberation Sans", sans-serif' font-size="24" fill="#666">60</text><text x="1753" y="803.6" text-anchor="end" font-family='"Liberation Sans", sans-serif' font-size="24" fill="#666">80</text><text x="1753" y="753.4" text-anchor="end" font-family='"Liberation Sans", sans-serif' font-size="24" fill="#666">100</text><text x="1753" y="703.1" text-anchor="end" font-family='"Liberation Sans", sans-serif' font-size="24" fill="#666">120</text><text x="1753" y="652.9" text-anchor="end" font-family='"Liberation Sans", sans-serif' font-size="24" fill="#666">140</text><text x="1753" y="602.6" text-anchor="end" font-family='"Liberation Sans", sans-serif' font-size="24" fill="#666">160</text></svg>
<div style="position:absolute;left:604px;top:1135.3px;width:1667px;height:900px;background:#fff;border-radius:12px;box-shadow:rgba(50,50,93,0.025) 0 4px 10px -2px, rgba(0,0,0,0.05) 0 2px 6px -2px;"></div>
<div class="t" id="mpt" style="top:1171.37px;font-size:33px;line-height:33px;color:#212121;letter-spacing:0.500px;-webkit-text-stroke:0.15px #212121;left:634.80px;">Real-Time</div>
<svg style="position:absolute;left:2198.00px;top:1166.00px" width="40" height="40" viewBox="0 0 24 24" fill="none" stroke="#757575" stroke-width="2" stroke-linecap="round" stroke-linejoin="round"><circle cx="12" cy="12" r="2" fill="#757575" stroke="none"/><circle cx="12" cy="5" r="2" fill="#757575" stroke="none"/><circle cx="12" cy="19" r="2" fill="#757575" stroke="none"/></svg>
<svg style="position:absolute;left:604px;top:1220px" width="1667" height="720" viewBox="604 1220 1667 720"><path fill="#e3eaf0" stroke="#e3eaf0" stroke-width="1" stroke-linejoin="round" d="M734.0 1379.7L748.0 1373.9L758.6 1375.8L750.8 1367.3L740.2 1361.2L753.9 1353.7L769.6 1344.6L779.0 1341.0L797.0 1344.6L812.6 1347.4L832.2 1349.5L840.0 1353.0L855.7 1357.1L863.5 1354.4L879.2 1350.9L890.9 1347.4L902.7 1353.7L918.3 1351.6L934.0 1357.1L943.7 1361.9L961.4 1364.6L969.2 1367.3L969.2 1371.9L973.1 1365.3L984.8 1362.6L1000.5 1365.3L1008.3 1360.5L1016.2 1362.6L1014.2 1353.7L1016.2 1341.0L1022.0 1335.9L1029.9 1346.7L1033.8 1353.7L1039.6 1360.5L1049.4 1367.3L1055.3 1363.9L1057.3 1351.6L1071.0 1352.3L1073.7 1360.5L1069.0 1373.9L1055.3 1375.8L1051.4 1383.5L1047.5 1389.8L1035.7 1391.7L1027.9 1402.1L1022.0 1414.0L1022.0 1421.0L1029.9 1431.2L1039.6 1431.2L1049.4 1436.7L1059.2 1440.6L1069.8 1441.6L1070.2 1452.9L1074.9 1460.8L1080.7 1462.4L1083.9 1455.6L1080.7 1444.9L1090.5 1436.7L1092.5 1425.5L1084.7 1419.8L1088.6 1408.1L1086.6 1399.7L1102.3 1399.7L1117.9 1408.1L1119.9 1419.8L1125.7 1422.7L1133.6 1419.8L1138.3 1412.2L1149.2 1428.4L1157.1 1439.5L1166.8 1444.9L1172.7 1452.9L1172.7 1460.3L1161.0 1467.0L1145.3 1467.5L1131.6 1468.5L1121.8 1476.1L1114.0 1484.1L1125.7 1476.1L1140.2 1474.6L1137.5 1481.1L1139.4 1487.1L1153.1 1483.6L1155.9 1486.1L1153.1 1491.9L1143.4 1495.3L1133.6 1500.6L1133.6 1495.8L1139.4 1491.0L1129.7 1493.4L1123.8 1496.8L1117.1 1500.1L1115.2 1505.3L1117.9 1508.6L1112.0 1510.5L1102.3 1514.2L1102.3 1519.3L1096.4 1523.9L1094.4 1530.7L1096.4 1538.7L1088.6 1544.0L1082.7 1547.1L1074.9 1553.6L1073.7 1561.4L1076.8 1569.9L1078.8 1576.2L1077.2 1581.7L1073.7 1581.2L1071.0 1575.0L1067.8 1569.9L1068.2 1565.7L1063.1 1561.4L1057.3 1562.7L1051.4 1559.7L1043.6 1560.1L1042.4 1564.8L1035.7 1564.4L1024.8 1562.7L1020.1 1564.8L1012.2 1570.8L1011.1 1578.3L1009.1 1586.7L1009.1 1593.7L1011.5 1599.8L1016.2 1607.1L1022.0 1610.4L1031.8 1608.8L1035.7 1607.1L1037.7 1599.8L1043.6 1597.4L1051.4 1597.0L1049.4 1605.1L1047.5 1609.2L1046.3 1615.2L1044.7 1620.1L1055.3 1620.1L1065.9 1623.3L1065.1 1631.2L1064.7 1639.2L1067.0 1643.1L1072.9 1647.5L1080.7 1645.1L1088.6 1648.3L1089.3 1649.1L1087.0 1654.2L1084.7 1650.2L1078.8 1653.4L1076.8 1650.2L1076.8 1653.8L1072.1 1653.0L1067.0 1649.8L1064.3 1648.7L1059.2 1643.1L1056.1 1639.6L1049.4 1631.2L1041.6 1629.2L1033.8 1627.3L1024.0 1618.8L1020.1 1619.2L1012.2 1620.1L1002.5 1616.4L992.7 1611.2L984.8 1607.1L979.0 1601.5L979.8 1597.0L975.1 1589.6L969.2 1582.5L964.1 1576.2L959.4 1570.8L952.7 1565.7L949.6 1557.1L942.6 1553.6L943.7 1561.4L950.4 1569.9L956.7 1578.3L960.2 1585.8L963.3 1590.4L960.6 1589.1L953.5 1583.3L952.4 1577.5L945.7 1573.3L941.8 1570.8L944.9 1566.9L938.7 1560.1L934.0 1550.6L928.9 1544.9L920.3 1541.8L915.2 1532.9L912.4 1527.1L907.3 1519.3L905.4 1515.2L905.8 1507.7L906.6 1495.8L906.6 1487.5L903.8 1476.6L910.5 1477.6L912.4 1481.1L910.5 1473.6L904.6 1468.5L894.8 1463.4L890.9 1455.6L883.1 1444.9L879.2 1439.5L871.3 1428.4L861.6 1424.4L855.7 1421.5L845.9 1415.2L836.1 1414.0L826.3 1412.8L820.5 1409.3L812.6 1412.2L806.8 1415.8L797.8 1418.7L798.9 1411.1L802.8 1406.9L795.0 1411.1L791.1 1418.1L785.2 1425.5L777.4 1432.3L769.6 1437.8L759.8 1441.6L752.0 1443.3L746.9 1444.4L757.8 1437.8L765.7 1433.9L773.5 1427.8L775.4 1421.5L769.6 1422.1L759.8 1421.5L757.8 1415.2L750.0 1414.6L744.1 1408.1L746.1 1399.1L753.9 1395.4L761.7 1392.9L761.7 1387.3L753.9 1386.7L741.0 1386.7ZM1133.6 1402.1L1123.8 1397.3L1114.0 1396.0L1106.2 1388.0L1100.3 1386.7L1086.6 1386.1L1088.6 1380.3L1102.3 1380.3L1106.2 1373.9L1106.2 1363.9L1094.4 1357.1L1084.7 1350.2L1071.0 1350.2L1059.2 1350.2L1045.5 1343.1L1041.6 1332.2L1039.6 1323.3L1059.2 1322.5L1074.9 1323.3L1086.6 1328.5L1094.4 1330.8L1110.1 1338.8L1123.8 1348.1L1129.7 1357.1L1141.4 1367.3L1151.2 1371.9L1147.3 1380.3L1141.4 1383.5L1135.5 1386.7L1138.3 1394.8ZM930.0 1335.9L926.1 1339.5L932.0 1346.0L934.0 1351.6L949.6 1359.9L965.3 1359.2L980.9 1358.5L992.7 1357.1L997.4 1350.2L984.8 1343.1L980.9 1330.0L969.2 1326.3L961.4 1330.0L945.7 1327.0L930.0 1331.5ZM902.7 1335.9L910.5 1342.4L920.3 1339.5L930.0 1330.0L939.8 1324.8L932.0 1319.4L918.3 1317.1L906.6 1319.4L902.7 1328.5ZM934.0 1309.3L949.6 1317.1L969.2 1314.8L979.0 1309.3L965.3 1299.6L945.7 1303.7L934.0 1302.9ZM996.6 1339.5L1012.2 1335.9L1012.2 1324.8L1000.5 1321.0L990.7 1328.5ZM1018.1 1334.4L1037.7 1330.8L1039.6 1322.5L1027.9 1319.4L1016.2 1324.0ZM1014.2 1309.3L1031.8 1315.6L1047.5 1317.1L1071.0 1317.1L1078.8 1311.7L1074.9 1306.9L1055.3 1308.5L1043.6 1301.3L1027.9 1298.8L1016.2 1301.3ZM984.8 1311.7L1008.3 1313.2L1010.3 1302.9L996.6 1298.8L984.8 1302.9ZM1067.0 1302.9L1086.6 1301.3L1090.5 1290.5L1098.4 1284.6L1110.1 1274.1L1129.7 1265.2L1149.2 1253.1L1145.3 1245.4L1117.9 1242.5L1086.6 1243.5L1055.3 1251.2L1039.6 1257.8L1051.4 1267.0L1059.2 1275.9L1051.4 1287.1L1043.6 1295.5L1051.4 1302.1ZM1020.1 1267.0L1035.7 1260.6L1047.5 1271.5L1043.6 1284.6L1027.9 1282.0L1016.2 1273.3ZM984.8 1284.6L1004.4 1290.5L1012.2 1284.6L1000.5 1277.7L984.8 1278.5ZM910.5 1303.7L926.1 1306.9L937.9 1298.8L926.1 1293.0L910.5 1297.2ZM1051.4 1389.8L1057.3 1394.8L1067.0 1397.3L1074.9 1392.9L1077.6 1388.0L1071.0 1384.8L1063.1 1378.4L1055.3 1380.3ZM1004.4 1357.1L1016.2 1359.9L1018.1 1354.4L1010.3 1351.6ZM1159.8 1480.1L1174.7 1484.1L1184.5 1485.1L1185.6 1480.6L1182.5 1476.1L1180.5 1471.6L1173.5 1468.5L1174.7 1460.3L1168.8 1463.4L1164.9 1471.1L1161.0 1477.1ZM889.7 1464.4L901.5 1467.5L908.5 1476.1L903.4 1475.6L896.8 1471.1ZM871.3 1447.1L876.4 1447.6L878.4 1456.6L874.1 1454.0ZM787.2 1429.5L795.0 1425.5L795.8 1428.9L789.9 1432.3ZM1139.8 1469.6L1149.2 1471.6L1145.3 1473.1ZM1106.2 1286.3L1125.7 1278.5L1137.5 1273.3L1149.2 1260.6L1176.6 1250.2L1215.8 1245.4L1254.9 1238.5L1286.2 1240.5L1313.6 1251.2L1341.0 1257.8L1344.9 1271.5L1325.4 1273.3L1317.5 1288.8L1319.5 1301.3L1315.6 1313.2L1309.7 1324.8L1305.8 1335.9L1305.8 1346.7L1298.0 1353.7L1286.2 1361.9L1270.6 1363.9L1258.8 1373.9L1245.1 1379.1L1235.3 1383.5L1229.5 1396.0L1223.6 1411.1L1217.7 1414.6L1211.9 1409.9L1202.1 1406.3L1196.2 1397.3L1190.3 1386.7L1182.5 1373.9L1182.5 1360.5L1192.3 1353.7L1178.6 1346.7L1176.6 1332.2L1168.8 1317.1L1161.0 1306.9L1145.3 1303.7L1125.7 1305.3L1114.0 1297.2ZM1296.8 1380.3L1305.8 1374.5L1321.4 1376.5L1333.2 1375.2L1338.7 1381.6L1333.2 1388.0L1319.5 1393.6L1309.7 1391.1L1303.1 1389.8L1305.8 1384.8L1298.0 1384.2L1303.8 1381.0ZM1089.3 1648.7L1094.4 1645.9L1096.4 1640.8L1101.5 1638.4L1110.1 1634.4L1112.8 1633.6L1112.0 1639.2L1117.9 1637.2L1117.9 1634.4L1123.8 1639.2L1133.6 1640.8L1139.4 1642.3L1149.2 1640.4L1153.1 1645.1L1153.1 1648.3L1161.0 1651.0L1166.8 1657.7L1176.6 1658.9L1186.4 1661.6L1190.3 1665.6L1194.2 1675.4L1196.2 1680.4L1194.2 1682.4L1202.1 1684.4L1206.0 1685.1L1217.7 1691.4L1229.5 1693.8L1239.3 1696.1L1246.3 1701.2L1253.7 1703.2L1255.7 1711.0L1254.1 1718.9L1247.1 1727.6L1241.2 1733.6L1239.3 1743.5L1238.5 1752.8L1235.3 1761.7L1231.4 1769.9L1223.6 1774.0L1216.6 1775.2L1209.9 1779.0L1202.9 1785.2L1201.3 1794.9L1196.2 1803.4L1188.4 1812.9L1182.5 1820.8L1176.6 1824.7L1168.8 1823.0L1163.3 1821.7L1168.0 1829.6L1166.1 1838.6L1157.1 1842.7L1148.4 1843.2L1148.1 1851.5L1137.5 1852.4L1142.2 1859.5L1136.7 1864.2L1135.5 1871.4L1127.7 1876.3L1134.4 1883.7L1127.7 1893.7L1121.8 1898.8L1124.2 1908.2L1123.8 1909.8L1127.7 1917.2L1136.7 1921.0L1129.7 1924.2L1119.9 1924.2L1110.1 1918.8L1102.3 1911.9L1097.2 1898.8L1096.4 1888.7L1100.3 1880.2L1096.4 1876.3L1102.3 1869.0L1106.2 1859.5L1103.0 1854.8L1104.2 1845.5L1104.2 1835.0L1107.4 1827.4L1111.7 1816.4L1112.0 1805.6L1112.8 1794.9L1115.6 1784.4L1116.7 1772.0L1117.1 1761.7L1116.4 1754.8L1112.0 1750.8L1104.2 1746.8L1097.6 1742.7L1093.3 1736.8L1089.7 1729.6L1085.4 1721.7L1081.9 1713.8L1078.8 1707.9L1074.1 1705.1L1073.7 1700.0L1077.6 1695.7L1078.8 1692.2L1074.9 1691.0L1075.6 1686.3L1078.8 1681.6L1080.7 1678.5L1083.5 1676.5L1084.7 1672.6L1089.3 1667.5L1088.6 1660.9L1089.0 1655.7L1087.0 1654.2ZM1153.1 1904.0L1164.9 1903.5L1165.7 1906.6L1157.1 1907.6ZM1368.8 1536.1L1371.2 1535.6L1380.2 1538.3L1384.1 1539.2L1391.9 1536.1L1397.8 1532.9L1403.6 1531.6L1411.5 1531.6L1419.3 1530.7L1427.1 1529.8L1431.8 1529.8L1435.0 1531.1L1433.4 1537.4L1431.0 1542.7L1434.2 1545.3L1436.9 1548.0L1442.8 1548.8L1451.8 1551.5L1453.7 1555.8L1462.4 1559.2L1469.4 1559.2L1470.2 1554.9L1471.0 1551.0L1478.0 1548.8L1483.1 1551.9L1489.8 1554.1L1497.6 1556.2L1505.4 1557.5L1511.3 1554.9L1517.1 1555.8L1518.3 1555.8L1519.5 1561.8L1523.0 1569.9L1525.0 1576.2L1528.9 1584.6L1531.6 1590.8L1536.7 1597.0L1537.9 1603.1L1538.7 1609.2L1543.8 1613.2L1546.5 1621.3L1552.4 1625.3L1558.2 1631.2L1561.4 1633.2L1561.0 1637.2L1566.1 1641.2L1573.9 1640.0L1582.9 1638.0L1592.3 1635.6L1591.9 1641.2L1589.6 1647.1L1585.6 1655.0L1581.7 1661.6L1577.0 1667.5L1571.9 1672.6L1566.1 1676.5L1560.2 1682.4L1555.5 1688.3L1550.4 1693.0L1547.3 1698.8L1544.5 1705.9L1546.5 1711.8L1545.7 1717.7L1549.2 1723.6L1551.2 1731.6L1551.2 1741.5L1546.5 1748.4L1538.7 1752.8L1534.0 1757.7L1528.9 1761.7L1530.1 1769.9L1530.8 1778.1L1523.0 1783.6L1519.9 1786.5L1520.3 1794.9L1515.2 1801.3L1510.5 1808.6L1503.4 1815.5L1495.6 1819.9L1489.8 1820.8L1480.0 1821.7L1470.2 1824.3L1464.3 1821.7L1463.5 1815.1L1463.1 1809.9L1459.2 1803.4L1456.5 1797.4L1451.4 1789.8L1449.4 1782.3L1448.7 1773.2L1445.9 1765.8L1440.8 1755.6L1438.1 1750.4L1438.5 1743.5L1441.2 1734.8L1445.5 1729.6L1445.9 1723.6L1443.6 1717.7L1440.8 1707.9L1439.7 1705.1L1436.1 1698.8L1429.9 1691.8L1426.3 1685.5L1428.7 1681.2L1429.9 1676.5L1430.3 1670.7L1427.1 1666.0L1425.2 1664.4L1419.3 1665.2L1415.4 1665.6L1411.5 1660.9L1407.6 1657.7L1401.7 1657.7L1395.8 1659.3L1389.9 1661.6L1384.1 1663.6L1378.2 1662.4L1370.4 1662.4L1362.5 1665.2L1356.7 1662.8L1349.6 1656.9L1343.0 1653.0L1339.8 1647.9L1337.9 1643.9L1333.2 1639.2L1327.3 1634.0L1326.1 1629.2L1323.4 1624.5L1326.9 1619.2L1328.1 1613.2L1328.9 1607.1L1325.4 1599.0L1327.3 1592.8L1330.1 1586.7L1334.0 1580.4L1339.1 1573.3L1341.4 1570.3L1347.7 1566.5L1352.8 1563.1L1353.9 1557.1L1355.9 1550.6L1362.5 1545.3L1366.5 1541.8ZM1584.9 1729.6L1588.4 1737.5L1589.2 1743.5L1586.0 1751.6L1582.9 1761.7L1579.0 1774.0L1575.9 1782.3L1568.8 1784.4L1564.1 1780.2L1561.4 1771.1L1565.3 1761.7L1564.1 1753.6L1566.1 1746.8L1571.9 1744.3L1577.8 1740.7L1581.7 1734.4ZM1356.7 1530.7L1357.5 1523.9L1354.7 1522.5L1357.5 1512.4L1355.9 1503.0L1360.6 1499.6L1372.3 1500.6L1380.2 1501.1L1385.2 1501.1L1387.2 1495.8L1387.2 1488.5L1383.3 1482.6L1374.3 1479.1L1373.5 1476.1L1380.2 1474.6L1385.6 1475.1L1384.9 1470.1L1387.2 1471.6L1392.7 1470.6L1397.8 1467.5L1398.6 1463.4L1404.8 1461.3L1408.7 1457.2L1410.7 1452.9L1417.3 1450.3L1423.2 1449.7L1426.0 1447.6L1424.4 1439.5L1424.0 1431.2L1433.0 1427.2L1432.2 1433.9L1431.0 1439.5L1430.3 1443.3L1435.0 1447.6L1440.8 1445.4L1446.7 1447.6L1456.5 1444.9L1464.3 1443.8L1469.4 1445.4L1474.1 1440.6L1474.1 1432.3L1478.0 1427.8L1485.8 1430.0L1487.0 1423.8L1483.9 1418.7L1493.7 1416.3L1501.5 1415.8L1510.1 1414.6L1503.4 1411.1L1493.7 1411.7L1481.9 1414.6L1476.1 1410.5L1475.3 1403.3L1475.3 1396.0L1481.9 1389.8L1489.8 1383.5L1487.8 1379.1L1478.0 1379.7L1475.3 1386.7L1466.3 1394.8L1459.6 1402.1L1459.2 1409.9L1465.5 1415.2L1460.4 1421.5L1456.5 1428.4L1454.5 1435.6L1447.9 1439.5L1442.8 1440.0L1441.6 1435.6L1438.1 1428.4L1435.7 1419.8L1433.4 1416.9L1429.1 1421.0L1423.2 1425.0L1419.3 1425.5L1413.8 1421.5L1411.5 1414.0L1411.5 1405.1L1415.4 1399.1L1425.2 1392.9L1433.0 1386.7L1438.9 1380.3L1442.8 1370.6L1450.6 1361.9L1456.5 1357.1L1466.3 1351.6L1476.1 1348.8L1483.9 1344.6L1492.9 1342.4L1501.5 1343.1L1513.2 1348.1L1509.3 1352.3L1521.1 1354.4L1532.8 1356.4L1548.5 1363.9L1553.5 1370.6L1550.4 1375.2L1540.6 1376.5L1528.9 1373.9L1521.1 1370.6L1519.1 1373.9L1526.9 1380.3L1528.1 1386.7L1536.7 1390.5L1540.6 1386.7L1550.4 1386.1L1548.5 1378.4L1556.3 1374.5L1564.1 1375.8L1564.1 1367.3L1562.2 1360.5L1571.9 1363.9L1573.9 1371.9L1579.8 1366.6L1599.3 1361.9L1607.2 1360.5L1618.9 1358.5L1628.7 1353.7L1630.7 1350.9L1642.4 1355.1L1650.2 1357.1L1654.1 1360.5L1662.0 1360.5L1653.4 1346.7L1658.1 1332.2L1665.9 1326.3L1675.7 1332.2L1676.8 1346.7L1675.7 1360.5L1680.8 1370.6L1673.7 1375.8L1681.5 1371.9L1685.5 1360.5L1681.5 1346.7L1683.5 1332.2L1695.2 1333.7L1705.0 1332.2L1708.9 1324.8L1728.5 1322.5L1732.4 1313.2L1752.0 1306.1L1771.6 1305.3L1783.3 1301.3L1800.1 1291.4L1810.7 1297.2L1830.3 1301.3L1836.1 1309.3L1822.4 1319.4L1834.2 1322.5L1853.8 1326.3L1877.2 1324.8L1889.0 1326.3L1896.8 1334.4L1898.8 1341.7L1912.5 1339.5L1928.1 1339.5L1939.9 1332.2L1959.4 1333.7L1979.0 1339.5L1990.7 1343.8L2010.3 1343.8L2018.1 1352.3L2026.0 1353.0L2037.7 1353.7L2049.5 1351.6L2059.2 1350.9L2061.2 1357.1L2080.8 1352.3L2096.4 1357.1L2112.1 1365.3L2119.9 1369.3L2136.7 1376.5L2125.8 1385.4L2112.1 1386.7L2100.3 1380.3L2092.5 1384.8L2086.6 1385.4L2094.5 1397.3L2080.8 1402.1L2065.1 1408.1L2059.2 1414.0L2043.6 1414.0L2033.8 1414.6L2031.1 1422.7L2027.9 1426.7L2031.1 1435.1L2026.0 1442.2L2018.1 1451.9L2012.3 1455.6L2005.6 1463.4L2002.5 1452.9L2001.3 1439.5L2004.4 1428.4L2010.3 1425.5L2018.1 1415.2L2027.9 1408.1L2018.1 1403.9L2006.4 1403.9L1998.6 1416.9L1982.9 1416.9L1967.3 1418.1L1951.6 1418.1L1941.8 1425.5L1932.0 1432.3L1924.2 1443.3L1932.0 1447.6L1941.8 1451.3L1944.9 1456.6L1941.8 1466.0L1941.0 1476.1L1934.0 1484.6L1926.2 1493.4L1916.4 1501.5L1910.5 1502.5L1904.6 1504.9L1900.7 1507.7L1898.8 1512.4L1892.9 1517.0L1890.9 1520.2L1894.8 1524.8L1898.4 1530.7L1898.4 1537.4L1894.8 1540.1L1887.0 1542.3L1886.2 1537.4L1887.8 1530.7L1885.1 1527.1L1881.2 1526.2L1882.3 1519.3L1878.4 1517.5L1871.4 1519.3L1866.3 1522.5L1869.4 1514.7L1865.5 1512.8L1857.7 1520.7L1853.0 1521.6L1855.7 1526.2L1859.6 1529.3L1865.5 1527.5L1871.8 1529.3L1865.5 1532.9L1858.8 1538.7L1862.8 1544.0L1865.5 1550.6L1869.0 1554.9L1868.6 1557.5L1865.5 1560.1L1869.4 1562.2L1867.8 1567.8L1863.5 1574.1L1859.6 1580.4L1853.8 1585.0L1847.9 1590.8L1839.3 1593.3L1834.2 1594.9L1826.4 1597.4L1823.6 1601.9L1821.3 1597.0L1815.8 1596.5L1809.5 1600.6L1806.0 1605.9L1808.7 1612.0L1813.8 1618.0L1818.5 1623.3L1819.7 1631.2L1819.3 1636.0L1814.6 1640.0L1809.9 1641.9L1808.7 1645.5L1802.9 1648.7L1802.1 1643.1L1797.0 1640.8L1793.1 1635.2L1787.2 1632.4L1786.8 1629.2L1783.3 1629.6L1783.3 1635.2L1780.6 1641.2L1781.3 1646.3L1785.3 1653.8L1789.2 1655.7L1793.1 1658.9L1796.6 1664.8L1797.0 1671.4L1799.7 1676.9L1796.6 1676.5L1788.4 1671.4L1785.3 1665.6L1784.5 1658.9L1781.3 1654.2L1776.6 1651.0L1777.0 1645.1L1778.2 1639.2L1777.4 1631.2L1774.7 1623.3L1773.9 1617.2L1769.6 1617.2L1764.9 1620.1L1761.0 1618.4L1761.8 1611.2L1758.6 1605.1L1753.2 1599.0L1751.2 1593.3L1746.1 1592.4L1740.2 1595.7L1732.4 1597.0L1731.6 1601.0L1726.5 1603.9L1720.7 1609.2L1714.0 1615.2L1708.9 1619.2L1705.8 1621.3L1705.8 1629.2L1704.6 1635.2L1704.2 1641.9L1701.1 1645.9L1698.0 1647.5L1695.2 1650.6L1691.3 1647.1L1689.4 1641.2L1686.6 1635.2L1683.5 1627.3L1679.6 1619.2L1677.6 1611.2L1676.8 1605.1L1676.4 1599.0L1675.7 1595.7L1674.9 1599.0L1669.0 1600.2L1662.7 1593.7L1667.1 1591.2L1660.0 1588.7L1655.3 1584.6L1652.2 1581.2L1642.4 1581.2L1632.6 1582.1L1622.8 1580.8L1616.2 1579.2L1613.0 1574.1L1605.2 1575.8L1599.3 1574.1L1593.5 1570.3L1589.6 1563.5L1583.7 1560.1L1579.8 1562.2L1581.7 1567.8L1585.6 1572.9L1588.4 1576.2L1590.7 1583.3L1592.7 1578.3L1593.9 1582.5L1594.6 1585.8L1603.3 1586.2L1611.1 1579.2L1612.6 1577.1L1613.4 1584.6L1621.3 1588.3L1626.0 1592.8L1622.0 1601.0L1618.1 1607.1L1613.0 1611.2L1607.2 1615.2L1596.6 1619.2L1583.7 1626.1L1570.0 1631.2L1562.2 1632.4L1559.4 1625.3L1558.6 1618.0L1552.4 1609.2L1545.7 1599.0L1542.6 1590.8L1537.9 1584.6L1532.8 1576.2L1528.9 1569.9L1528.1 1563.5L1526.2 1569.9L1525.8 1571.2L1522.2 1567.8L1519.5 1561.8L1518.3 1555.8L1525.8 1555.8L1528.5 1550.6L1530.8 1544.0L1532.4 1537.4L1532.8 1532.5L1526.9 1532.0L1519.1 1534.7L1511.7 1531.6L1505.4 1532.9L1499.5 1531.6L1498.8 1527.5L1494.8 1523.9L1496.8 1520.2L1494.4 1517.0L1493.7 1513.8L1485.8 1512.8L1483.9 1516.1L1485.8 1517.0L1481.1 1515.2L1480.7 1520.2L1482.7 1522.1L1485.8 1526.2L1481.9 1528.4L1482.7 1532.9L1480.0 1532.9L1476.8 1531.6L1474.9 1527.1L1474.1 1524.3L1472.1 1520.2L1468.2 1515.6L1467.8 1510.0L1464.3 1505.3L1456.5 1500.6L1451.4 1496.8L1447.9 1492.4L1445.5 1491.0L1440.0 1491.9L1440.4 1497.2L1445.1 1500.6L1447.5 1505.8L1454.5 1508.2L1458.4 1512.4L1464.3 1516.5L1463.5 1517.9L1458.4 1514.7L1456.5 1518.4L1458.8 1521.6L1456.5 1524.3L1453.7 1526.4L1454.1 1522.5L1453.3 1517.0L1448.7 1513.8L1442.8 1511.0L1438.9 1507.7L1435.0 1505.3L1432.2 1500.6L1429.1 1496.8L1425.2 1496.8L1421.3 1499.2L1415.4 1502.5L1409.5 1501.1L1404.4 1502.0L1404.4 1506.3L1400.5 1510.5L1395.0 1513.3L1391.1 1519.3L1392.7 1522.5L1389.6 1527.1L1384.9 1531.6L1374.7 1532.0L1370.8 1534.7L1367.2 1532.5L1364.5 1529.8L1360.6 1530.7ZM1369.6 1468.0L1378.2 1467.0L1388.0 1465.0L1397.0 1462.4L1398.6 1454.5L1393.1 1452.9L1391.9 1449.7L1387.2 1444.4L1385.6 1439.5L1383.7 1436.7L1380.2 1436.2L1384.1 1427.2L1378.2 1427.2L1376.2 1427.8L1379.8 1422.1L1372.3 1422.1L1369.2 1428.4L1367.6 1432.8L1370.4 1436.7L1372.3 1442.2L1376.2 1443.3L1379.4 1442.7L1380.2 1448.7L1380.2 1451.3L1374.3 1451.3L1375.5 1454.0L1373.1 1458.2L1371.5 1459.2L1378.2 1461.3L1380.2 1462.4L1374.3 1463.4ZM1352.8 1459.2L1358.6 1460.3L1367.2 1457.2L1368.4 1451.3L1370.4 1445.4L1367.6 1441.1L1362.5 1440.6L1358.6 1444.9L1352.8 1446.5L1354.7 1451.9L1352.8 1457.2ZM1440.4 1526.2L1453.0 1525.2L1451.0 1532.0L1441.2 1528.0ZM1424.0 1512.4L1429.9 1512.4L1429.5 1520.7L1424.8 1521.6ZM1425.6 1505.3L1428.7 1503.0L1429.1 1510.0L1426.3 1510.0ZM1483.9 1537.4L1494.8 1538.7L1493.7 1539.6L1484.3 1538.7ZM1518.3 1539.6L1526.9 1536.9L1525.0 1540.1L1520.3 1541.4ZM1435.0 1438.4L1440.8 1436.7L1440.0 1442.2L1435.7 1441.6ZM1435.0 1280.3L1446.7 1273.3L1458.4 1271.5L1474.1 1268.8L1497.6 1271.5L1485.8 1278.5L1474.1 1284.6L1466.3 1294.7L1458.4 1300.5L1450.6 1294.7L1444.7 1288.8ZM1571.9 1266.1L1587.6 1263.3L1595.4 1268.8L1579.8 1270.6ZM1603.3 1263.3L1622.8 1259.6L1634.6 1264.3L1615.0 1269.7ZM1593.5 1339.5L1601.3 1344.6L1615.0 1345.3L1609.1 1332.2L1611.1 1321.0L1622.8 1311.7L1642.4 1303.7L1660.0 1298.8L1650.2 1297.2L1626.7 1302.9L1611.1 1310.9L1603.3 1324.8L1595.4 1333.7ZM1763.7 1278.5L1775.5 1269.7L1791.1 1276.8L1802.9 1284.6L1787.2 1288.8L1771.6 1282.0ZM1755.9 1271.5L1771.6 1260.6L1775.5 1267.0L1763.7 1271.5ZM1928.1 1309.3L1947.7 1305.3L1963.3 1310.1L1979.0 1311.7L1975.1 1315.6L1951.6 1314.0L1935.9 1315.6ZM1939.9 1321.7L1951.6 1324.0L1947.7 1327.0L1939.9 1325.5ZM2090.5 1341.7L2102.3 1339.5L2104.2 1343.1L2092.5 1344.6ZM1947.7 1446.0L1951.6 1450.3L1952.8 1458.2L1954.7 1468.5L1958.3 1473.6L1951.6 1483.6L1953.6 1487.5L1947.7 1488.5L1947.7 1478.6L1948.5 1466.0L1946.5 1458.2ZM1939.9 1510.0L1943.8 1505.3L1952.4 1507.7L1961.4 1501.5L1960.2 1497.2L1951.6 1495.8L1946.5 1491.4L1946.1 1500.6L1941.0 1503.9ZM1943.8 1511.0L1945.7 1514.7L1947.7 1519.3L1943.8 1526.2L1943.8 1531.6L1943.0 1536.5L1939.1 1539.6L1935.2 1540.9L1928.1 1541.4L1927.3 1542.7L1923.4 1546.2L1920.3 1541.8L1912.5 1542.7L1908.5 1544.0L1904.6 1544.0L1904.6 1541.4L1910.9 1537.8L1918.3 1536.9L1924.2 1536.1L1927.3 1530.7L1929.3 1528.4L1934.0 1529.3L1937.9 1523.9L1939.9 1517.0L1941.0 1512.4ZM1900.7 1546.2L1904.6 1544.9L1908.5 1548.4L1906.2 1554.9L1902.7 1556.2L1901.5 1550.6L1899.5 1547.5ZM1910.5 1544.0L1918.3 1543.1L1917.6 1546.2L1912.5 1549.3L1909.7 1547.1ZM1865.5 1581.7L1869.4 1582.5L1865.5 1594.9L1862.4 1590.8ZM1817.4 1605.9L1822.4 1603.1L1826.4 1604.3L1823.6 1609.2L1818.5 1610.0ZM1705.0 1643.9L1709.7 1649.1L1712.1 1655.0L1708.9 1658.1L1705.8 1658.9L1703.8 1653.0L1704.6 1647.1ZM1863.5 1609.2L1870.2 1609.6L1870.2 1617.2L1867.5 1621.3L1869.4 1627.3L1876.5 1628.4L1877.2 1632.4L1871.4 1629.2L1865.5 1628.4L1863.5 1625.3L1861.6 1619.2ZM1869.4 1655.0L1875.3 1649.1L1883.1 1643.9L1887.0 1653.0L1885.1 1657.7L1882.3 1659.7L1877.2 1656.9ZM1873.3 1637.2L1883.1 1633.2L1883.1 1641.2L1875.3 1645.1L1870.2 1641.2ZM1851.0 1649.1L1859.6 1639.2L1860.4 1641.2L1852.6 1649.8ZM1818.5 1676.5L1820.5 1674.6L1826.4 1675.4L1828.3 1671.4L1834.2 1669.5L1840.1 1664.4L1844.0 1660.9L1849.1 1655.4L1851.8 1656.9L1858.4 1661.6L1853.8 1665.6L1853.0 1670.7L1853.8 1676.5L1857.7 1678.5L1853.0 1680.4L1851.8 1685.5L1847.9 1690.2L1847.1 1697.3L1840.8 1698.5L1834.2 1694.9L1828.3 1695.7L1823.2 1693.4L1822.4 1688.3L1818.5 1683.2ZM1764.9 1660.5L1773.5 1662.0L1778.2 1667.5L1785.3 1673.4L1790.3 1675.7L1797.0 1680.4L1798.2 1686.3L1802.9 1691.4L1806.8 1694.1L1806.4 1705.1L1801.3 1705.1L1792.3 1698.1L1787.2 1692.2L1784.5 1685.9L1779.4 1679.3L1775.5 1672.6L1769.6 1667.5ZM1803.7 1709.1L1808.7 1705.9L1816.6 1707.9L1825.6 1707.5L1833.0 1709.4L1840.1 1713.0L1839.7 1716.5L1826.4 1715.0L1814.6 1713.0L1808.3 1711.4ZM1842.0 1714.2L1849.8 1714.6L1857.7 1715.0L1865.5 1715.4L1873.3 1714.6L1873.3 1716.5L1861.6 1717.3L1849.8 1717.7L1842.0 1716.9ZM1875.3 1722.9L1881.2 1717.7L1890.2 1715.4L1887.0 1718.5L1879.2 1722.5ZM1857.7 1719.7L1864.7 1720.1L1862.8 1722.9L1858.4 1721.7ZM1859.6 1703.9L1860.8 1696.1L1856.9 1693.0L1859.6 1685.5L1860.8 1680.4L1864.7 1677.3L1873.3 1678.5L1880.4 1675.7L1881.9 1676.9L1877.2 1680.8L1867.5 1680.4L1862.4 1681.2L1862.0 1685.5L1866.7 1686.3L1874.1 1685.1L1874.9 1686.3L1868.6 1689.4L1869.4 1693.4L1872.9 1698.8L1873.3 1703.2L1869.4 1701.2L1867.5 1698.8L1865.5 1693.4L1862.8 1694.1L1863.1 1703.9ZM1890.9 1674.6L1893.7 1676.5L1895.6 1680.4L1892.9 1685.1L1891.7 1679.3ZM1892.9 1694.1L1903.9 1694.1L1902.7 1696.5L1894.1 1696.1ZM1885.1 1694.9L1889.8 1694.9L1889.0 1697.3L1885.8 1696.9ZM1904.6 1685.5L1910.5 1684.0L1916.4 1685.5L1917.2 1692.2L1922.2 1695.3L1930.1 1688.7L1935.9 1690.2L1943.8 1692.6L1953.6 1696.1L1959.4 1700.0L1963.3 1703.9L1969.2 1705.9L1970.4 1709.1L1967.3 1709.1L1971.2 1713.8L1977.0 1719.7L1982.1 1722.9L1979.0 1724.4L1971.2 1722.5L1965.3 1716.9L1959.4 1713.0L1955.5 1712.6L1951.6 1715.7L1952.8 1718.1L1943.8 1718.5L1937.9 1713.8L1932.0 1715.0L1935.2 1709.8L1932.0 1703.9L1924.2 1700.4L1916.4 1697.7L1912.5 1698.5L1911.7 1695.3L1908.5 1693.4L1914.4 1691.4L1908.5 1690.2L1904.6 1687.9ZM1973.1 1703.9L1981.0 1703.9L1986.8 1698.8L1988.0 1702.0L1981.0 1707.1L1975.1 1706.7ZM1982.1 1692.6L1988.8 1696.1L1990.7 1700.4L1988.0 1698.1L1982.9 1694.1ZM1997.0 1703.9L2001.7 1707.9L2000.5 1709.4L1997.4 1706.7ZM2016.2 1718.9L2021.3 1720.9L2019.3 1721.3L2016.6 1720.1ZM2033.8 1762.1L2039.7 1765.8L2045.5 1770.7L2043.6 1771.5L2036.9 1767.0ZM2044.0 1741.5L2046.3 1743.5L2045.1 1744.3ZM2085.9 1751.6L2090.9 1752.0L2089.8 1754.4L2086.2 1754.0ZM1949.6 1724.4L1953.6 1731.6L1954.7 1738.7L1960.6 1741.5L1963.3 1751.6L1964.5 1757.7L1971.2 1761.7L1977.0 1769.9L1982.1 1776.1L1988.8 1782.3L1991.5 1788.6L1992.7 1797.0L1990.7 1807.7L1988.0 1815.5L1984.1 1820.8L1981.0 1827.4L1979.0 1835.5L1971.2 1838.2L1964.5 1843.2L1958.3 1840.0L1953.6 1842.3L1943.8 1839.6L1938.7 1834.1L1937.1 1828.7L1932.8 1827.4L1934.0 1823.0L1930.9 1826.1L1932.0 1822.1L1931.2 1814.2L1924.2 1824.3L1921.5 1824.3L1916.4 1816.4L1908.5 1812.0L1896.8 1810.3L1885.1 1813.3L1877.2 1816.4L1875.3 1820.3L1861.6 1820.3L1853.8 1825.2L1845.9 1824.7L1842.0 1822.1L1844.4 1814.2L1842.8 1805.6L1838.9 1794.9L1835.4 1786.5L1836.1 1780.2L1836.9 1772.4L1838.9 1769.1L1847.9 1764.2L1857.7 1761.7L1866.7 1759.7L1870.6 1751.6L1875.3 1749.6L1877.2 1746.4L1881.2 1741.5L1887.0 1737.5L1892.9 1740.7L1898.8 1741.1L1900.7 1734.8L1903.9 1731.2L1910.5 1729.6L1911.3 1726.8L1920.3 1730.4L1927.3 1730.4L1925.0 1735.6L1923.0 1741.5L1930.1 1745.6L1936.7 1751.2L1943.0 1751.6L1945.7 1743.5L1946.5 1735.6L1946.9 1729.6ZM1958.3 1851.0L1965.3 1852.9L1972.3 1852.0L1972.0 1858.1L1968.4 1864.2L1963.3 1864.7L1960.6 1859.5ZM2067.8 1822.5L2074.1 1827.4L2078.8 1832.8L2080.8 1836.8L2088.6 1836.8L2090.5 1837.3L2086.6 1844.6L2084.3 1847.8L2078.0 1855.2L2075.7 1853.8L2076.9 1848.7L2072.9 1845.5L2075.7 1840.9L2075.7 1834.1L2071.0 1827.4ZM2067.8 1850.1L2073.7 1853.8L2072.9 1857.1L2068.2 1864.2L2062.4 1868.0L2060.4 1875.3L2053.4 1879.2L2047.5 1877.3L2043.6 1875.3L2049.5 1868.0L2059.2 1861.8L2063.2 1856.2ZM1059.2 1595.7L1067.0 1590.8L1076.8 1590.4L1088.6 1595.7L1096.4 1600.2L1101.5 1602.3L1088.6 1603.5L1087.4 1601.0L1084.7 1597.0L1076.8 1594.9L1071.0 1593.7L1065.1 1594.5ZM1100.7 1609.2L1106.2 1603.5L1111.3 1603.9L1117.9 1603.9L1124.2 1608.8L1117.9 1610.0L1112.0 1612.4L1108.1 1610.4ZM1085.4 1609.6L1093.3 1610.8L1090.5 1612.0ZM1128.9 1609.6L1134.8 1610.0L1131.6 1611.2ZM1150.0 1640.4L1153.1 1640.4L1152.8 1642.7ZM781.7 1604.3L784.1 1603.5L784.8 1605.1L782.9 1606.3ZM1661.2 1891.2L1667.1 1891.7L1665.9 1894.2L1662.0 1894.2ZM2129.7 1392.3L2139.5 1394.2L2135.6 1396.0ZM738.3 1412.8L743.0 1412.2L742.2 1415.2ZM736.3 1449.7L741.0 1447.6L740.2 1450.3ZM2117.9 1458.2L2123.8 1457.2L2121.9 1459.2ZM1401.3 1518.8L1405.2 1517.9L1404.0 1520.2ZM1463.1 1426.1L1466.3 1426.7L1463.9 1431.2Z"/><path fill="#fff" d="M1505.4 1511.4L1515.2 1511.4L1523.0 1507.7L1528.9 1507.7L1534.8 1511.0L1542.6 1512.4L1550.4 1512.4L1554.7 1509.6L1554.3 1505.3L1548.5 1501.1L1542.6 1496.8L1538.7 1494.8L1535.9 1491.9L1538.7 1491.4L1540.6 1488.5L1544.5 1482.6L1536.7 1483.6L1528.9 1487.5L1530.8 1491.4L1534.8 1492.4L1530.5 1493.4L1525.8 1496.3L1523.0 1495.8L1519.5 1491.9L1523.0 1488.5L1517.1 1487.5L1512.5 1486.1L1508.5 1491.9L1504.6 1495.8L1503.8 1500.6L1501.1 1503.9L1501.5 1507.7L1502.7 1509.6ZM1575.1 1495.8L1577.8 1503.0L1581.7 1507.7L1585.6 1514.2L1588.8 1515.2L1584.9 1520.2L1583.3 1524.8L1585.6 1528.4L1591.5 1531.6L1599.3 1531.6L1603.3 1529.3L1602.5 1521.6L1599.3 1517.0L1598.6 1510.0L1597.4 1505.3L1592.7 1502.0L1589.6 1495.8L1591.5 1493.4L1599.3 1491.9L1599.3 1484.6L1591.5 1483.6L1583.7 1486.1L1577.8 1490.0ZM1497.6 1514.7L1507.4 1514.2L1505.4 1511.9L1499.5 1512.4Z"/><path fill="none" stroke="#fff" stroke-width="1.2" stroke-linejoin="round" d="M910.5 1473.6L1020.1 1473.6L1047.5 1477.6L1061.2 1486.1L1069.0 1491.9L1069.0 1505.3L1082.7 1503.9L1082.7 1500.6L1092.5 1497.2L1099.5 1493.4L1112.0 1493.4L1121.1 1481.6L1126.5 1483.6L1126.5 1490.0L1129.7 1493.4M840.0 1353.0L840.0 1412.2L853.7 1420.4L863.5 1416.9L871.3 1431.2L883.1 1436.7L883.1 1443.8M933.6 1550.6L942.6 1550.6L957.4 1555.8L968.4 1555.8L968.4 1553.6L975.1 1553.6L982.9 1563.1L988.8 1565.7L992.7 1562.2L996.6 1563.5L1002.5 1572.0L1011.1 1578.3M1031.0 1625.3L1033.8 1619.2L1037.7 1619.2L1035.7 1614.4L1042.8 1612.0L1046.3 1609.6M1089.3 1649.1L1088.6 1653.0M1110.1 1634.4L1108.1 1641.2L1108.9 1651.0L1117.9 1655.0L1127.7 1658.1L1128.5 1668.7L1129.7 1677.7L1117.9 1680.4L1117.9 1698.8L1106.2 1700.0L1102.3 1711.0L1107.0 1719.7L1116.0 1719.7L1115.6 1725.6L1119.9 1725.6L1123.0 1731.6L1121.8 1743.5L1119.9 1750.8L1116.4 1754.8M1157.1 1649.8L1152.4 1658.9L1154.3 1662.0L1157.1 1662.8L1157.8 1674.6L1164.9 1676.5L1170.8 1674.6L1178.6 1673.4L1186.4 1673.4L1190.3 1665.6M1083.5 1676.5L1096.4 1682.4L1097.2 1686.3L1106.2 1691.4L1117.9 1698.8M1077.6 1695.7L1082.7 1702.0L1085.4 1696.1L1096.4 1688.3M1119.9 1725.6L1136.3 1721.7L1136.3 1729.6L1155.1 1736.4L1157.1 1746.4L1163.7 1746.8L1166.1 1757.7L1164.1 1761.7L1165.7 1770.3L1173.5 1771.1L1178.6 1778.1L1178.2 1784.8L1181.7 1787.3L1181.3 1791.5L1166.5 1804.3L1174.7 1807.7L1182.5 1814.2L1182.9 1819.5M1165.7 1770.3L1146.9 1770.7L1128.9 1773.2L1125.0 1767.8L1122.6 1761.7L1119.9 1750.8M1146.9 1770.7L1153.1 1778.1L1166.5 1784.4L1162.5 1791.5L1173.5 1792.4L1178.2 1784.8M1166.5 1804.3L1163.3 1820.3M1128.9 1773.2L1123.8 1781.5L1124.6 1790.7L1117.9 1803.4L1117.9 1818.6L1116.4 1829.6L1113.2 1843.2L1110.9 1857.1L1112.0 1871.4L1110.1 1883.7L1106.2 1896.3L1108.9 1905.0L1124.2 1908.2M1341.0 1571.2L1357.8 1571.2L1357.8 1566.9L1378.2 1554.1L1387.2 1551.9L1384.1 1539.2M1357.8 1572.9L1408.3 1606.3L1414.6 1605.1L1438.9 1588.7L1431.0 1582.5L1429.1 1560.5L1424.0 1550.6L1421.3 1544.0L1425.6 1531.1M1429.1 1560.5L1436.9 1548.0M1438.9 1588.7L1447.5 1592.4L1454.5 1588.7L1485.8 1605.1L1485.8 1603.1L1489.8 1603.1L1489.8 1554.5M1489.8 1594.9L1536.3 1594.9M1485.8 1605.1L1485.8 1620.5L1481.5 1620.9L1480.0 1631.2L1480.0 1639.2L1484.7 1648.3L1499.1 1662.0L1512.5 1668.7L1513.2 1667.9L1523.0 1667.5L1530.1 1661.6L1525.0 1649.1L1521.1 1641.2L1521.8 1634.4L1533.2 1632.4L1534.8 1626.1L1542.6 1611.2M1447.5 1592.4L1450.6 1599.0L1454.1 1601.5L1452.6 1615.6L1444.7 1625.3L1445.1 1628.4L1448.7 1631.6L1447.5 1633.6L1450.6 1643.1L1444.7 1651.8L1436.9 1656.5L1427.1 1664.4M1408.3 1606.3L1408.3 1617.2L1405.6 1621.7L1395.8 1623.3L1392.7 1623.7L1388.0 1625.3L1379.4 1628.4L1370.4 1641.6L1360.6 1642.3L1359.4 1652.6L1362.5 1665.2M1325.4 1599.0L1341.0 1597.8L1341.0 1590.8L1344.9 1588.7L1344.9 1578.3L1357.8 1578.3L1357.8 1572.9M1328.1 1617.2L1335.9 1616.8L1344.1 1624.1L1347.3 1633.6L1344.1 1633.6L1338.3 1632.8L1326.5 1633.6M1344.1 1624.1L1346.9 1620.9L1370.4 1621.3L1370.4 1617.2L1366.5 1582.5L1373.1 1582.5M1405.6 1621.7L1406.0 1636.4L1402.5 1651.4L1402.5 1657.7M1406.0 1636.4L1407.6 1629.2L1419.3 1631.2L1427.1 1632.0L1445.1 1628.4M1448.7 1631.6L1452.6 1643.1L1446.7 1643.1L1451.4 1653.0L1448.7 1660.9L1454.5 1674.6L1443.6 1673.8L1436.1 1673.8L1436.1 1678.5L1430.3 1678.5M1454.5 1674.6L1464.3 1668.7L1464.7 1665.6L1480.0 1666.0L1489.8 1662.4L1499.1 1662.0M1451.4 1653.0L1464.3 1651.0L1480.0 1639.2M1439.7 1705.1L1442.8 1700.4L1448.3 1701.6L1455.3 1690.2L1461.2 1684.4L1464.3 1668.7M1439.7 1705.1L1456.5 1705.5L1458.4 1709.8L1468.2 1709.8L1470.2 1710.6L1478.0 1726.4L1485.8 1725.6L1485.8 1733.6L1478.0 1733.6L1478.0 1751.6L1483.9 1752.0L1490.5 1752.8M1438.1 1750.4L1446.7 1751.2L1464.3 1751.2L1474.1 1753.6L1483.9 1752.0M1470.2 1796.6L1470.2 1781.5L1474.1 1769.9L1474.1 1753.6M1456.5 1797.4L1470.2 1796.6L1472.9 1789.8L1480.7 1784.0L1491.7 1784.8L1497.6 1776.5L1507.0 1770.7L1514.4 1771.5L1517.1 1780.2L1517.1 1789.8L1520.7 1790.3M1490.5 1752.8L1497.6 1753.6L1505.0 1744.7L1510.9 1743.9L1521.1 1737.5L1519.9 1736.0L1522.2 1731.2L1522.2 1720.1L1520.7 1719.3L1513.2 1716.1L1512.1 1714.6L1505.0 1715.7L1503.1 1718.9L1503.8 1729.2L1508.5 1730.4L1508.5 1735.2L1503.1 1731.6L1497.6 1729.6L1485.8 1725.6M1507.0 1770.7L1514.4 1771.5L1520.7 1760.9L1520.3 1748.4L1510.9 1743.9M1521.1 1737.5L1526.9 1739.5L1532.0 1745.6L1530.1 1750.0L1526.2 1744.7M1550.0 1723.2L1538.7 1728.4L1528.9 1728.0L1526.9 1725.6L1525.0 1719.7L1521.1 1719.3M1512.1 1714.6L1507.8 1707.1L1506.6 1699.6L1512.5 1691.8L1511.3 1686.7L1507.8 1687.9L1506.2 1692.6L1506.6 1699.6M1545.3 1700.8L1539.1 1694.1L1525.0 1686.3L1511.3 1686.7M1525.0 1686.3L1525.0 1666.0L1530.1 1661.6M1507.8 1687.9L1508.1 1679.3L1514.4 1673.8L1512.5 1668.7M1554.7 1689.1L1552.4 1682.4L1552.4 1670.7L1556.3 1666.7L1568.0 1662.8L1579.8 1651.0L1575.9 1651.0L1564.1 1647.1L1560.2 1637.2M1532.4 1664.4L1540.6 1668.3L1552.4 1667.1M1558.2 1633.2L1555.5 1639.2L1560.2 1637.2M1534.8 1626.1L1540.2 1623.7L1551.6 1626.5L1557.9 1633.2M1357.5 1508.2L1366.5 1508.2L1364.5 1518.4L1362.9 1529.8M1385.2 1501.5L1394.6 1504.4L1404.4 1505.8M1421.3 1499.2L1419.3 1489.0L1415.8 1487.5L1421.6 1480.6L1424.0 1473.6L1416.9 1471.1L1414.6 1471.1L1408.3 1468.5L1401.7 1462.9M1415.8 1487.5L1419.3 1489.0L1433.0 1484.6L1429.1 1481.1L1421.6 1480.6M1433.0 1484.6L1445.5 1486.1L1445.5 1490.5M1429.1 1481.1L1442.8 1481.1L1445.9 1475.1L1439.3 1467.0L1449.8 1463.4L1447.9 1448.1M1445.5 1486.1L1454.9 1484.6L1458.8 1478.6L1458.0 1475.6L1445.9 1475.1M1416.9 1471.1L1415.8 1465.0L1419.3 1457.2L1420.1 1451.3M1408.3 1461.3L1415.8 1465.0M1426.0 1442.7L1430.3 1443.3M1449.8 1463.4L1458.0 1466.5L1465.5 1471.1L1480.0 1473.1L1478.4 1476.6L1458.8 1478.6M1480.0 1473.1L1485.8 1464.4L1484.3 1455.0L1485.4 1447.6L1481.1 1445.4L1469.4 1445.4M1481.1 1445.4L1480.7 1442.2L1474.1 1440.6M1485.4 1447.6L1492.9 1446.5L1496.8 1440.6L1496.0 1438.4L1474.1 1436.2M1496.0 1438.4L1502.3 1435.6L1500.3 1428.9L1490.9 1425.5L1487.0 1426.1M1500.3 1428.9L1499.1 1421.0L1501.5 1416.9M1502.3 1435.6L1512.8 1438.9L1519.9 1450.8L1514.4 1457.7L1484.3 1460.3M1514.4 1457.7L1526.5 1459.2L1531.2 1466.5L1548.5 1470.6L1547.3 1479.6L1541.4 1483.1M1478.4 1476.6L1489.4 1480.1L1496.0 1477.1L1502.3 1487.1L1502.3 1491.0L1508.1 1492.4M1496.0 1477.1L1506.2 1478.6L1509.3 1486.6M1454.9 1484.6L1456.9 1486.1L1461.2 1489.0L1465.5 1489.0L1471.4 1487.5L1474.1 1487.1L1481.5 1478.6L1478.4 1476.6M1474.1 1487.1L1475.7 1494.4L1480.0 1495.8L1480.7 1499.2L1503.8 1499.6M1480.0 1495.8L1479.6 1506.3L1481.9 1511.0L1495.2 1509.1L1501.5 1507.7M1495.2 1509.1L1493.7 1513.3M1467.8 1508.2L1472.1 1506.7L1472.5 1512.4L1470.2 1518.4M1472.5 1512.4L1481.5 1511.0M1445.5 1491.0L1451.8 1491.0L1456.9 1486.1M1451.8 1492.4L1453.7 1492.4L1458.4 1492.4L1466.3 1493.9L1467.8 1493.9L1466.7 1500.6L1464.3 1505.3M1466.3 1493.9L1465.5 1489.0M1467.8 1493.9L1475.7 1494.4M1472.1 1506.7L1476.1 1506.7L1479.6 1506.3M1466.7 1500.6L1471.4 1503.9L1472.1 1506.7M1438.1 1419.8L1440.8 1411.1L1439.7 1403.9L1439.3 1392.3L1446.7 1386.7L1448.7 1376.5L1456.1 1363.9L1463.1 1360.5L1470.2 1357.1L1472.5 1356.4M1472.5 1356.4L1484.7 1364.6L1484.3 1375.8L1486.6 1378.4M1472.5 1356.4L1476.4 1355.1L1492.5 1355.8L1493.7 1350.9L1501.5 1350.2L1505.4 1355.1L1505.0 1357.1L1512.8 1353.0M1505.0 1357.1L1509.3 1365.9L1505.4 1371.2L1509.3 1379.1L1508.1 1384.8L1515.2 1396.6L1500.7 1411.1M1533.6 1532.0L1540.6 1531.6L1557.9 1530.2L1567.2 1529.8L1565.7 1519.8L1562.6 1516.5L1562.2 1511.9L1554.3 1510.0M1532.4 1535.6L1533.6 1532.0M1565.7 1519.8L1573.9 1522.1L1579.8 1518.4L1583.3 1524.3M1562.2 1511.9L1573.9 1508.2L1582.1 1508.6M1573.9 1508.2L1568.0 1504.4L1548.5 1501.1M1567.2 1529.8L1571.9 1536.1L1569.6 1544.0L1579.4 1553.6L1581.7 1561.4M1557.9 1530.2L1553.2 1540.5L1543.8 1546.7L1531.6 1549.7L1529.3 1548.0M1543.8 1546.7L1545.3 1551.9L1536.7 1554.9L1540.6 1559.2L1538.7 1561.4L1532.8 1564.8L1528.9 1563.5M1545.3 1551.9L1550.0 1553.2L1566.9 1564.8L1573.9 1565.2L1578.6 1567.8L1581.3 1567.8M1530.8 1544.5L1535.2 1543.1L1532.8 1541.4M1526.2 1556.2L1528.5 1563.5M1530.8 1551.0L1530.8 1555.8L1528.9 1555.4L1529.7 1550.6M1595.4 1607.1L1607.2 1603.1L1609.9 1594.9L1608.0 1592.0L1597.8 1591.2L1593.9 1585.8M1607.2 1603.1L1595.4 1607.1L1580.6 1610.4L1573.1 1614.4L1561.8 1613.2L1559.4 1617.6M1595.4 1607.1L1599.7 1616.8M1608.0 1592.0L1610.3 1585.8L1612.6 1582.9M1633.0 1581.7L1633.8 1577.1L1639.7 1573.3L1637.7 1569.1L1630.3 1561.8L1633.8 1558.0L1630.3 1554.9L1629.1 1547.5L1631.4 1536.9L1624.0 1528.4L1612.3 1525.7L1602.9 1529.3M1630.3 1561.8L1651.4 1561.8L1653.0 1556.2L1663.1 1553.2L1665.9 1544.0L1670.6 1540.9L1672.1 1533.8L1685.1 1529.8M1631.4 1536.9L1644.4 1533.8L1652.2 1528.9L1658.1 1530.7L1672.1 1532.0L1672.9 1524.8L1685.1 1529.8M1652.2 1528.9L1652.6 1526.2L1636.1 1517.0L1626.7 1509.1L1611.1 1511.0L1608.7 1511.0L1611.1 1493.4L1621.3 1490.5L1631.0 1497.2L1645.9 1499.6L1650.6 1503.0L1650.2 1507.7M1611.1 1511.0L1599.0 1508.2L1597.4 1505.3M1621.3 1490.5L1611.1 1493.4M1650.2 1507.7L1658.1 1511.9L1662.0 1510.5L1669.8 1506.3L1666.7 1512.4L1678.0 1513.3L1672.9 1520.2L1667.8 1517.0L1657.3 1520.2L1659.6 1525.2L1658.1 1530.7M1669.8 1506.3L1679.6 1503.0L1682.3 1502.0L1701.9 1503.9L1705.8 1506.7M1678.0 1513.3L1681.5 1516.5L1680.4 1519.3L1672.9 1520.2M1680.4 1519.3L1685.1 1524.3L1685.1 1529.8M1705.8 1506.7L1692.9 1512.4L1681.5 1516.5M1685.1 1529.8L1696.4 1537.4L1700.7 1542.7L1701.1 1550.6L1699.9 1554.9L1709.3 1560.5L1705.4 1566.5L1712.5 1570.3L1723.4 1573.3L1736.7 1576.6L1737.1 1570.3L1727.7 1569.1L1709.3 1560.5M1696.4 1537.4L1687.4 1551.5L1683.9 1556.7L1681.1 1561.8L1669.8 1570.8L1663.9 1575.4L1666.7 1579.6L1670.2 1583.7L1661.2 1585.4L1658.8 1587.9M1737.1 1570.3L1739.5 1572.9L1743.0 1569.1L1750.8 1570.8L1752.4 1574.5L1743.4 1575.4L1739.5 1572.9M1750.8 1570.8L1763.7 1565.2L1772.7 1568.6L1772.7 1570.8L1764.5 1578.3L1762.2 1581.7L1762.6 1584.6L1757.1 1586.7L1757.5 1594.9L1754.3 1597.8L1753.2 1600.2M1736.7 1576.6L1743.4 1578.3L1743.4 1581.2L1753.6 1582.5L1752.8 1585.8L1748.9 1588.3L1750.0 1591.2L1754.3 1597.8M1736.7 1576.6L1737.1 1579.2L1739.9 1581.7L1736.7 1584.6L1739.1 1589.6L1740.2 1594.5M1772.7 1568.6L1778.2 1572.0L1777.4 1579.2L1773.9 1584.6L1779.0 1590.0L1781.3 1591.2L1780.2 1594.5L1788.0 1597.4L1783.7 1601.5L1774.7 1608.8L1779.0 1617.6L1776.3 1622.5L1780.2 1628.4L1780.2 1636.4L1778.2 1642.3M1788.0 1597.4L1790.0 1592.8L1791.9 1593.3L1795.0 1592.8L1804.0 1589.6L1809.5 1591.2L1809.1 1596.5L1814.6 1597.0M1791.9 1593.3L1794.7 1596.1L1801.3 1600.6L1799.0 1605.5L1803.7 1608.4L1812.7 1619.2L1812.7 1625.3M1783.7 1601.5L1785.3 1605.1L1788.4 1605.1L1787.2 1612.0L1791.5 1610.4L1798.6 1610.0L1802.1 1617.2L1805.2 1622.1L1803.7 1626.1L1793.9 1626.5L1792.7 1628.8L1794.7 1636.4M1803.7 1626.1L1812.7 1625.3L1812.7 1634.0L1806.4 1636.4L1807.6 1639.6L1800.9 1641.6M1784.1 1656.9L1787.6 1659.7L1791.5 1658.1M1705.8 1506.7L1708.2 1502.0L1706.6 1493.4L1714.8 1492.4L1716.8 1482.6L1726.5 1483.1L1735.5 1472.6L1733.6 1473.1L1725.4 1470.6L1717.9 1463.4L1705.4 1464.4L1696.8 1451.3L1679.2 1448.1L1681.5 1444.4L1670.6 1447.1L1669.0 1440.6L1658.8 1442.2L1647.1 1446.0L1630.7 1448.1L1631.4 1453.5L1626.7 1458.7L1633.0 1461.8L1632.2 1464.4L1624.8 1466.0L1621.3 1463.4L1607.2 1465.0L1594.3 1460.8L1590.7 1459.8L1582.5 1465.5L1581.3 1469.6L1575.5 1472.6L1577.0 1479.6L1580.6 1480.1L1583.7 1486.1M1735.5 1472.6L1748.1 1492.4L1757.9 1493.9L1765.3 1496.8L1769.2 1504.4L1787.2 1505.3L1800.9 1508.2L1824.0 1503.9L1829.9 1499.6L1827.9 1496.3L1836.5 1494.8L1845.9 1490.0L1860.4 1485.6L1844.4 1479.1L1848.7 1469.6L1839.3 1467.0L1822.4 1472.6L1810.7 1470.1L1792.3 1465.5L1791.9 1461.8L1779.0 1457.7L1774.7 1463.4L1776.6 1466.0L1762.2 1468.5L1753.9 1464.4L1735.5 1472.6M1848.7 1469.6L1858.8 1468.0L1864.7 1458.2L1862.0 1454.0L1875.7 1450.3L1884.7 1452.9L1891.3 1469.6L1903.5 1474.1L1904.6 1480.1L1919.1 1477.1L1913.2 1492.9L1905.4 1493.9L1905.8 1500.6L1903.1 1505.8M1903.1 1505.8L1899.5 1505.8L1892.9 1507.7L1893.7 1510.5L1888.6 1508.6L1878.8 1516.5M1885.5 1527.5L1894.5 1523.4M1943.8 1692.6L1943.8 1718.5M1821.3 1674.6L1824.8 1678.9L1829.5 1678.5L1836.9 1677.3L1841.6 1673.4L1842.8 1665.6L1852.2 1666.0"/><circle cx="929.8" cy="1543.6" r="25" fill="rgba(255,255,255,0.28)"/><circle cx="929.8" cy="1543.6" r="18" fill="#91b3e9"/><circle cx="929.8" cy="1543.6" r="11.3" fill="#4782da"/><circle cx="1049.2" cy="1508.4" r="25" fill="rgba(255,255,255,0.28)"/><circle cx="1049.2" cy="1508.4" r="18" fill="#91b3e9"/><circle cx="1049.2" cy="1508.4" r="11.3" fill="#4782da"/><circle cx="1102.3" cy="1514" r="25" fill="rgba(255,255,255,0.28)"/><circle cx="1102.3" cy="1514" r="18" fill="#91b3e9"/><circle cx="1102.3" cy="1514" r="11.3" fill="#4782da"/><circle cx="1391.5" cy="1461" r="25" fill="rgba(255,255,255,0.28)"/><circle cx="1391.5" cy="1461" r="18" fill="#91b3e9"/><circle cx="1391.5" cy="1461" r="11.3" fill="#4782da"/><circle cx="1377.6" cy="1515.5" r="25" fill="rgba(255,255,255,0.28)"/><circle cx="1377.6" cy="1515.5" r="18" fill="#91b3e9"/><circle cx="1377.6" cy="1515.5" r="11.3" fill="#4782da"/><circle cx="1539.1" cy="1438.9" r="25" fill="rgba(255,255,255,0.28)"/><circle cx="1539.1" cy="1438.9" r="18" fill="#91b3e9"/><circle cx="1539.1" cy="1438.9" r="11.3" fill="#4782da"/><circle cx="1505.1" cy="1512.7" r="25" fill="rgba(255,255,255,0.28)"/><circle cx="1505.1" cy="1512.7" r="18" fill="#91b3e9"/><circle cx="1505.1" cy="1512.7" r="11.3" fill="#4782da"/><circle cx="1693.6" cy="1567" r="25" fill="rgba(255,255,255,0.28)"/><circle cx="1693.6" cy="1567" r="18" fill="#91b3e9"/><circle cx="1693.6" cy="1567" r="11.3" fill="#4782da"/><circle cx="1846.7" cy="1517.4" r="25" fill="rgba(255,255,255,0.28)"/><circle cx="1846.7" cy="1517.4" r="18" fill="#91b3e9"/><circle cx="1846.7" cy="1517.4" r="11.3" fill="#4782da"/></svg>
<div style="position:absolute;left:656px;top:1259px;width:32px;height:31.5px;background:#292929;border-radius:6px;"></div>
<div style="position:absolute;left:656px;top:1299.1px;width:32px;height:31.5px;background:#292929;border-radius:6px;"></div>
<div style="position:absolute;left:665.3px;top:1276.2px;width:13.4px;height:2.4px;background:#fff;"></div>
<div style="position:absolute;left:670.8px;top:1270.7px;width:2.4px;height:13.4px;background:#fff;"></div>
<div style="position:absolute;left:665.3px;top:1316.3px;width:13.4px;height:2.4px;background:#fff;"></div>
<div style="position:absolute;left:2319.5px;top:1135.3px;width:808.5px;height:900px;background:#fff;border-radius:12px;box-shadow:rgba(50,50,93,0.025) 0 4px 10px -2px, rgba(0,0,0,0.05) 0 2px 6px -2px;"></div>
<div class="t" id="smt" style="top:1171.37px;font-size:33px;line-height:33px;color:#212121;letter-spacing:0.693px;-webkit-text-stroke:0.15px #212121;left:2350.80px;">Source / Medium</div>
<svg style="position:absolute;left:3056.00px;top:1166.00px" width="40" height="40" viewBox="0 0 24 24" fill="none" stroke="#757575" stroke-width="2" stroke-linecap="round" stroke-linejoin="round"><circle cx="12" cy="12" r="2" fill="#757575" stroke="none"/><circle cx="12" cy="5" r="2" fill="#757575" stroke="none"/><circle cx="12" cy="19" r="2" fill="#757575" stroke="none"/></svg>
<svg style="position:absolute;left:2540px;top:1260px" width="360" height="360" viewBox="2540 1260 360 360"><path d="M2721.50 1279.90 A157.7 157.7 0 0 1 2747.55 1593.13 L2743.87 1571.14 A135.4 135.4 0 0 0 2721.50 1302.20 Z" fill="#4782da"/><path d="M2747.55 1593.13 A157.7 157.7 0 0 1 2571.13 1485.13 L2592.40 1478.41 A135.4 135.4 0 0 0 2743.87 1571.14 Z" fill="#f44336"/><path d="M2571.13 1485.13 A157.7 157.7 0 0 1 2721.50 1279.90 L2721.50 1302.20 A135.4 135.4 0 0 0 2592.40 1478.41 Z" fill="#ff9800"/><line x1="2721.50" y1="1308.20" x2="2721.50" y2="1273.90" stroke="#fff" stroke-width="9.7"/><line x1="2742.88" y1="1565.22" x2="2748.54" y2="1599.05" stroke="#fff" stroke-width="9.7"/><line x1="2598.12" y1="1476.60" x2="2565.41" y2="1486.94" stroke="#fff" stroke-width="9.7"/></svg>
<div class="t" id="dn1" style="top:1397.68px;font-size:37px;line-height:37px;color:#212121;-webkit-text-stroke:0.25px #212121;left:2723.40px;transform:translateX(-50%) scaleX(0.9925);">+23%</div>
<div class="t" id="dn2" style="top:1447.68px;font-size:24px;line-height:24px;color:#212121;-webkit-text-stroke:0.15px #212121;left:2722.50px;transform:translateX(-50%);">new visitors</div>
<div class="t" id="th1" style="top:1637.49px;font-size:26px;line-height:26px;color:#212121;letter-spacing:1.000px;-webkit-text-stroke:0.4px #212121;left:2382.80px;">Source</div>
<div class="t" id="th2" style="top:1637.49px;font-size:26px;line-height:26px;color:#212121;letter-spacing:0.833px;-webkit-text-stroke:0.4px #212121;right:336.00px;">Revenue</div>
<div class="t" id="th3" style="top:1637.49px;font-size:26px;line-height:26px;color:#212121;letter-spacing:0.750px;-webkit-text-stroke:0.4px #212121;right:155.00px;">Value</div>
<div class="t" id="r0a" style="top:1720.29px;font-size:26px;line-height:26px;color:#212121;letter-spacing:0.860px;-webkit-text-stroke:0.15px #212121;left:2381.80px;">Social</div>
<div class="t" id="r0b" style="top:1720.29px;font-size:26px;line-height:26px;color:#212121;-webkit-text-stroke:0.15px #212121;right:338.00px;transform:scaleX(1.0881);transform-origin:100% 50%;">260</div>
<div class="t" id="r0c" style="top:1720.29px;font-size:26px;line-height:26px;color:#4caf50;-webkit-text-stroke:0.15px #4caf50;right:156.00px;transform:scaleX(1.0431);transform-origin:100% 50%;">+35%</div>
<div class="t" id="r1a" style="top:1805.39px;font-size:26px;line-height:26px;color:#212121;letter-spacing:0.523px;-webkit-text-stroke:0.15px #212121;left:2381.80px;">Search Engines</div>
<div class="t" id="r1b" style="top:1805.39px;font-size:26px;line-height:26px;color:#212121;-webkit-text-stroke:0.15px #212121;right:338.00px;transform:scaleX(1.0366);transform-origin:100% 50%;">125</div>
<div class="t" id="r1c" style="top:1805.39px;font-size:26px;line-height:26px;color:#f44336;-webkit-text-stroke:0.15px #f44336;right:156.00px;transform:scaleX(1.0431);transform-origin:100% 50%;">-12%</div>
<div class="t" id="r2a" style="top:1889.29px;font-size:26px;line-height:26px;color:#212121;letter-spacing:1.040px;-webkit-text-stroke:0.15px #212121;left:2381.80px;">Direct</div>
<div class="t" id="r2b" style="top:1889.29px;font-size:26px;line-height:26px;color:#212121;-webkit-text-stroke:0.15px #212121;right:338.00px;transform:scaleX(1.0381);transform-origin:100% 50%;">164</div>
<div class="t" id="r2c" style="top:1889.29px;font-size:26px;line-height:26px;color:#4caf50;-webkit-text-stroke:0.15px #4caf50;right:157.00px;transform:scaleX(1.0615);transform-origin:100% 50%;">+46%</div>
<div style="position:absolute;left:2351.5px;top:1774.5px;width:744.5px;height:2px;background:#e0e0e0;"></div>
<div style="position:absolute;left:2351.5px;top:1858px;width:744.5px;height:2px;background:#e0e0e0;"></div>
<div style="position:absolute;left:3048px;top:1774px;width:112px;height:112px;background:#376fd0;border-radius:50%;box-shadow:0 2px 8px 0 rgba(0,0,0,.07);"></div>
<svg style="position:absolute;left:3082.15px;top:1808.35px" width="44.5" height="44.5" viewBox="0 0 24 24" fill="#fff"><path d="M12 2C6.49 2 2 6.49 2 12s4.49 10 10 10a2.5 2.5 0 0 0 2.5-2.5c0-.61-.23-1.2-.64-1.67a.528.528 0 0 1-.13-.33c0-.28.22-.5.5-.5H16c3.31 0 6-2.69 6-6 0-4.96-4.49-9-10-9zm5.5 11c-.83 0-1.5-.67-1.5-1.5s.67-1.5 1.5-1.5 1.5.67 1.5 1.5-.67 1.5-1.5 1.5zm-3-4c-.83 0-1.5-.67-1.5-1.5S13.67 6 14.5 6s1.5.67 1.5 1.5S15.33 9 14.5 9zM5 11.5c0-.83.67-1.5 1.5-1.5s1.5.67 1.5 1.5S7.33 13 6.5 13 5 12.33 5 11.5zm6-4c0 .83-.67 1.5-1.5 1.5S8 8.33 8 7.5 8.67 6 9.5 6s1.5.67 1.5 1.5z"/></svg>
</div></body></html>
